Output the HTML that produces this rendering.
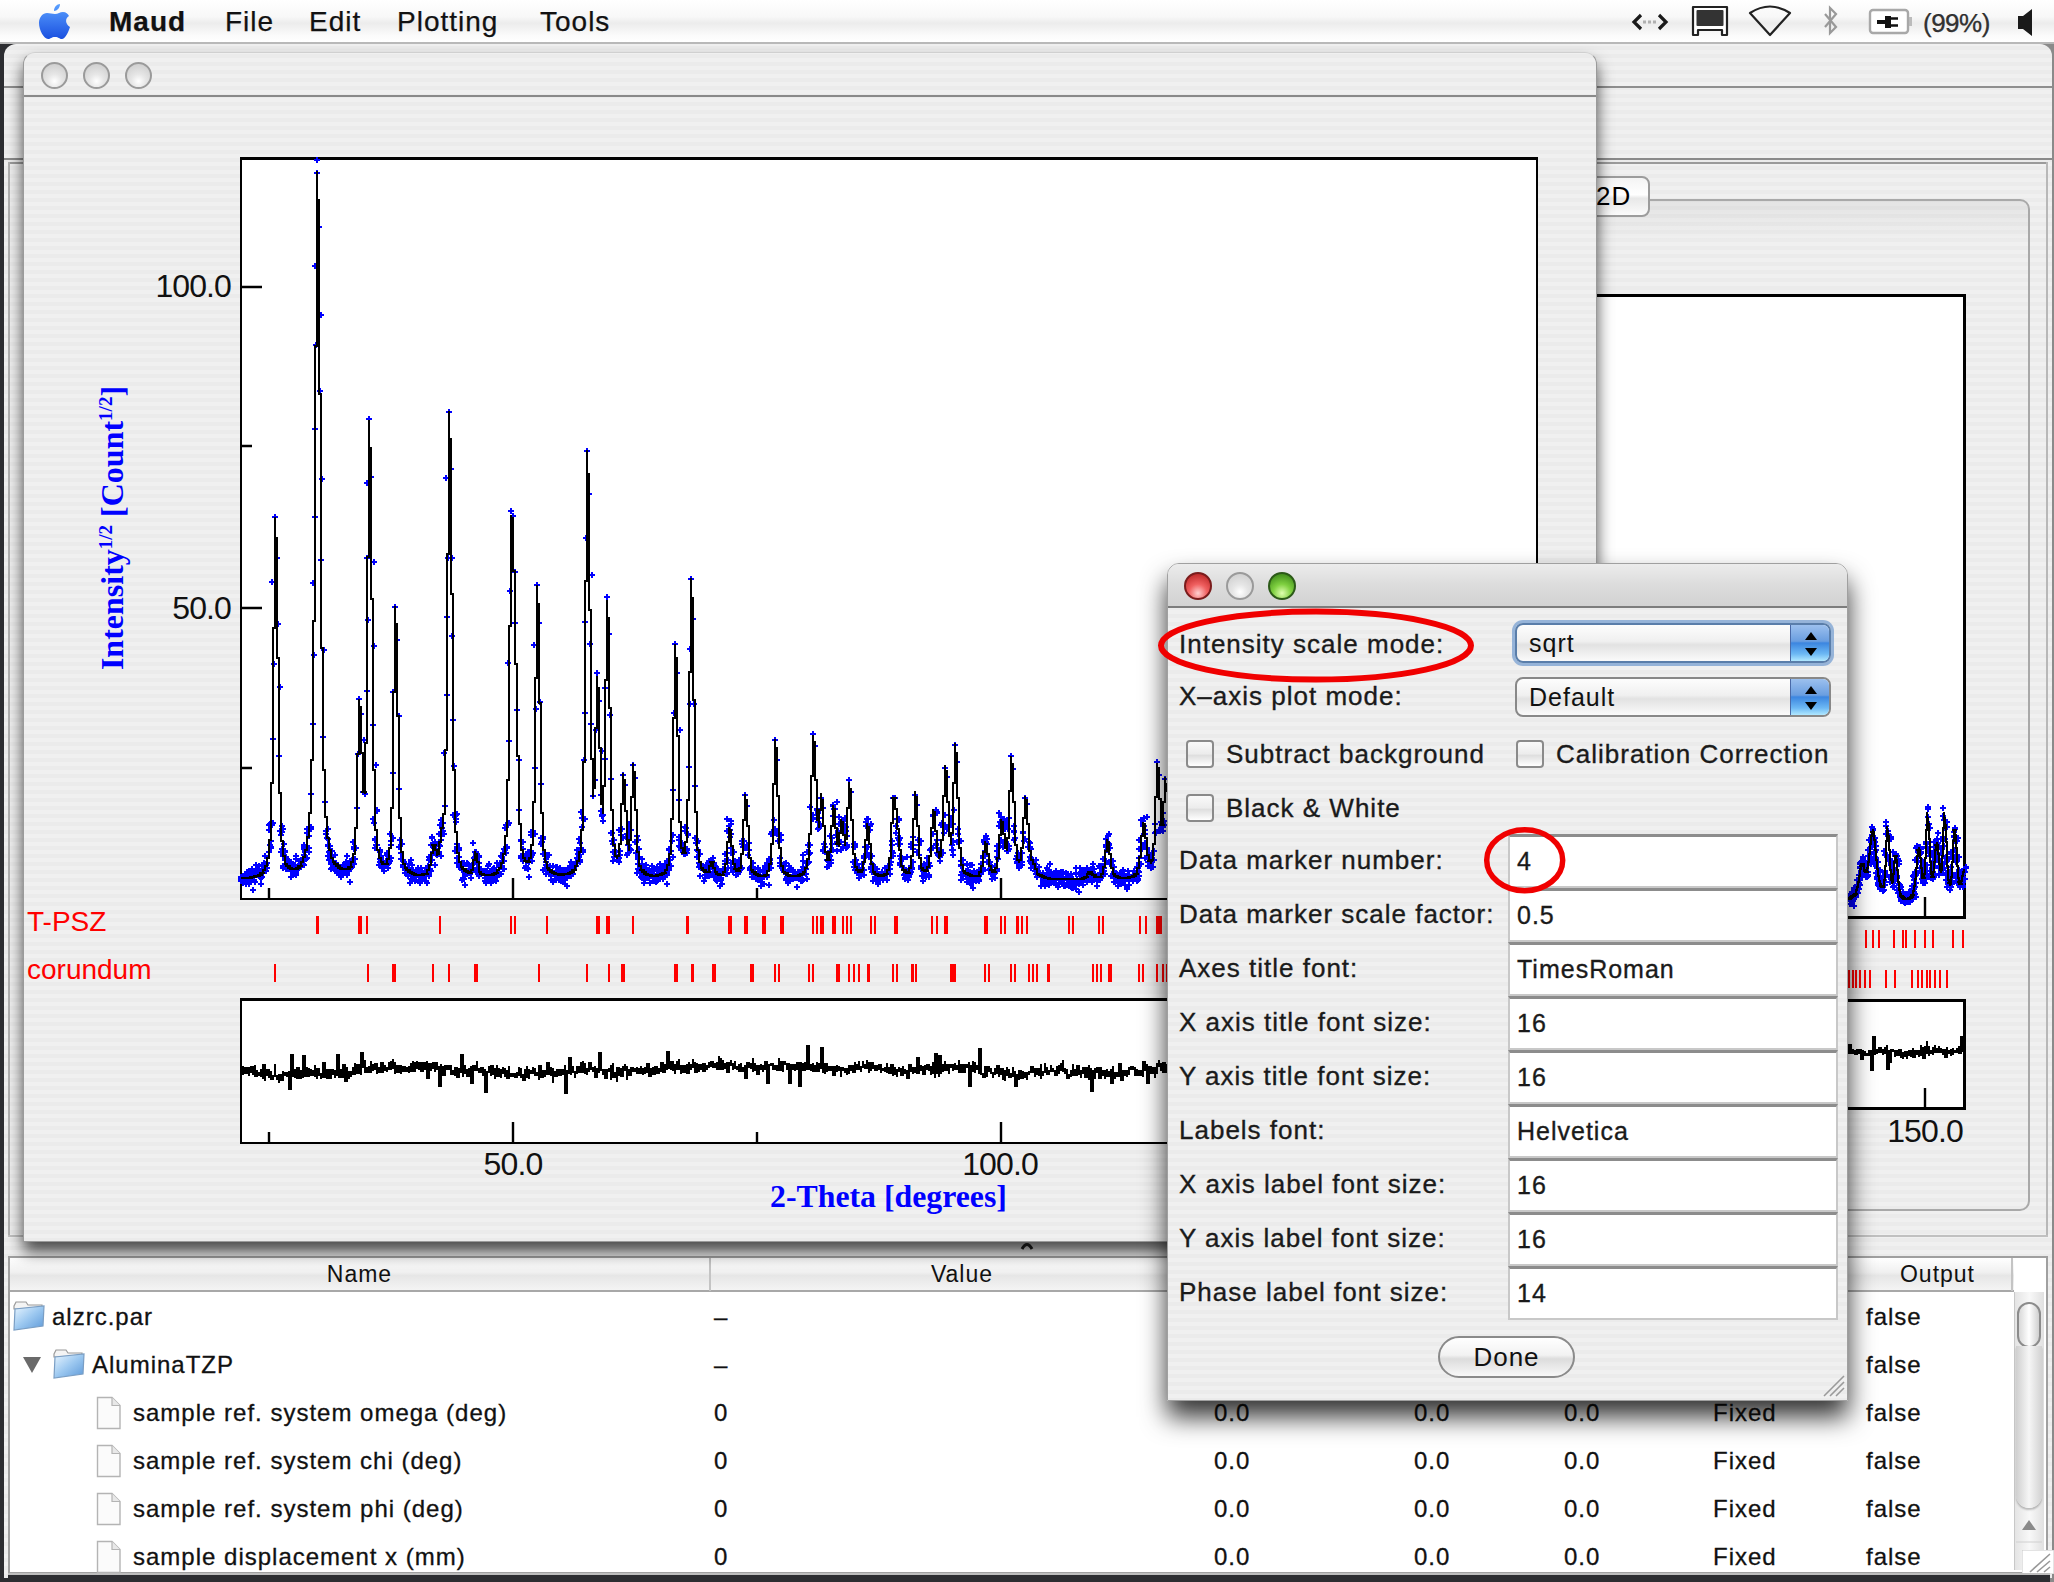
<!DOCTYPE html><html><head><meta charset="utf-8"><style>*{margin:0;padding:0;box-sizing:border-box}
html,body{width:2054px;height:1582px;overflow:hidden;background:#2c2d31;font-family:"Liberation Sans",sans-serif;color:#000}
.abs{position:absolute}
.pin{background:repeating-linear-gradient(to bottom,#ebebeb 0px,#ebebeb 2px,#f0f0f0 2px,#f0f0f0 6px,#ebebeb 6px,#ebebeb 8px);background-attachment:fixed}
#menubar{position:absolute;left:0;top:0;width:2054px;height:44px;background:linear-gradient(to bottom,#ffffff 0%,#f8f8f8 40%,#ececec 55%,#fbfbfb 85%,#ffffff 100%);border-bottom:2px solid #b8b8b8;z-index:50}
.menu{position:absolute;top:4px;font-size:28px;letter-spacing:1px;line-height:36px;color:#111;-webkit-text-stroke:0.25px #111}
</style></head><body><div class="abs" style="left:2040px;top:44px;width:14px;height:1538px;background:#8a8a8a"></div>
<div class="abs pin" style="left:4px;top:44px;width:2048px;height:1534px;border-radius:12px 12px 0 0"></div>
<div class="abs" style="left:4px;top:86px;width:2048px;height:2px;background:#8e8e8e"></div>
<div class="abs" style="left:4px;top:158px;width:2048px;height:2px;background:#8a8a8a"></div>
<div class="abs" style="left:8px;top:162px;width:2040px;height:2px;background:#9a9a9a"></div>
<div class="abs" style="left:8px;top:162px;width:2px;height:1075px;background:#b0b0b0"></div>
<div class="abs" style="left:2046px;top:162px;width:2px;height:1075px;background:#b8b8b8"></div>
<div class="abs" style="left:8px;top:1235px;width:2040px;height:2px;background:#c0c0c0"></div>
<div class="abs" style="left:1540px;top:199px;width:490px;height:1012px;border:2px solid #a9a9a9;border-radius:10px;background:linear-gradient(to bottom,rgba(0,0,0,0.05),rgba(0,0,0,0) 40px)"></div>
<div class="abs" style="left:1540px;top:176px;width:110px;height:41px;border:2px solid #9c9c9c;border-radius:8px;background:linear-gradient(to bottom,#f4f4f4,#ffffff 45%,#e8e8e8 55%,#fbfbfb);font-size:26px;letter-spacing:1px;line-height:37px;padding-left:54px">2D</div>
<div class="abs" style="left:1400px;top:294px;width:566px;height:625px;background:#fff;border:3px solid #000"></div>
<div class="abs" style="left:1400px;top:999px;width:566px;height:111px;background:#fff;border:3px solid #000"></div>
<div class="abs" style="left:1865px;top:1114px;width:120px;text-align:center;font-size:32px;letter-spacing:-0.9px;line-height:34px;color:#111">150.0</div>
<svg class="abs" style="left:0;top:0" width="2054" height="1582"><path d="M1847 904h6M1850 901v6M1847 895h6M1850 892v6M1847 895h6M1850 892v6M1845 899h6M1848 896v6M1848 895h6M1851 892v6M1846 899h6M1849 896v6M1845 897h6M1848 894v6M1849 899h6M1852 896v6M1845 896h6M1848 893v6M1848 896h6M1851 893v6M1850 894h6M1853 891v6M1850 893h6M1853 890v6M1846 899h6M1849 896v6M1847 898h6M1850 895v6M1850 901h6M1853 898v6M1850 897h6M1853 894v6M1851 898h6M1854 895v6M1849 893h6M1852 890v6M1850 898h6M1853 895v6M1849 896h6M1852 893v6M1851 906h6M1854 903v6M1848 895h6M1851 892v6M1850 895h6M1853 892v6M1850 898h6M1853 895v6M1848 900h6M1851 897v6M1852 897h6M1855 894v6M1849 897h6M1852 894v6M1849 892h6M1852 889v6M1849 897h6M1852 894v6M1849 902h6M1852 899v6M1853 890h6M1856 887v6M1853 897h6M1856 894v6M1850 892h6M1853 889v6M1852 893h6M1855 890v6M1852 896h6M1855 893v6M1854 893h6M1857 890v6M1851 895h6M1854 892v6M1851 896h6M1854 893v6M1851 888h6M1854 885v6M1855 893h6M1858 890v6M1853 887h6M1856 884v6M1853 890h6M1856 887v6M1855 888h6M1858 885v6M1855 888h6M1858 885v6M1853 895h6M1856 892v6M1857 885h6M1860 882v6M1855 885h6M1858 882v6M1854 885h6M1857 882v6M1856 889h6M1859 886v6M1857 885h6M1860 882v6M1854 880h6M1857 877v6M1857 879h6M1860 876v6M1856 883h6M1859 880v6M1856 879h6M1859 876v6M1857 880h6M1860 877v6M1859 872h6M1862 869v6M1856 875h6M1859 872v6M1859 872h6M1862 869v6M1858 875h6M1861 872v6M1859 875h6M1862 872v6M1857 867h6M1860 864v6M1857 864h6M1860 861v6M1858 871h6M1861 868v6M1857 863h6M1860 860v6M1857 868h6M1860 865v6M1861 867h6M1864 864v6M1858 862h6M1861 859v6M1860 861h6M1863 858v6M1861 865h6M1864 862v6M1857 864h6M1860 861v6M1858 862h6M1861 859v6M1861 864h6M1864 861v6M1860 859h6M1863 856v6M1861 868h6M1864 865v6M1860 857h6M1863 854v6M1859 867h6M1862 864v6M1860 868h6M1863 865v6M1863 872h6M1866 869v6M1863 870h6M1866 867v6M1860 869h6M1863 866v6M1860 874h6M1863 871v6M1861 872h6M1864 869v6M1860 873h6M1863 870v6M1864 872h6M1867 869v6M1864 872h6M1867 869v6M1862 872h6M1865 869v6M1864 877h6M1867 874v6M1865 872h6M1868 869v6M1865 876h6M1868 873v6M1861 871h6M1864 868v6M1865 875h6M1868 872v6M1862 868h6M1865 865v6M1862 870h6M1865 867v6M1862 870h6M1865 867v6M1864 865h6M1867 862v6M1863 877h6M1866 874v6M1866 861h6M1869 858v6M1864 865h6M1867 862v6M1865 863h6M1868 860v6M1863 870h6M1866 867v6M1867 860h6M1870 857v6M1867 859h6M1870 856v6M1868 864h6M1871 861v6M1867 859h6M1870 856v6M1868 860h6M1871 857v6M1865 850h6M1868 847v6M1865 856h6M1868 853v6M1867 849h6M1870 846v6M1868 854h6M1871 851v6M1868 847h6M1871 844v6M1869 835h6M1872 832v6M1870 840h6M1873 837v6M1870 844h6M1873 841v6M1869 840h6M1872 837v6M1866 840h6M1869 837v6M1869 837h6M1872 834v6M1870 830h6M1873 827v6M1869 827h6M1872 824v6M1870 829h6M1873 826v6M1870 839h6M1873 836v6M1872 838h6M1875 835v6M1873 850h6M1876 847v6M1873 846h6M1876 843v6M1872 842h6M1875 839v6M1871 840h6M1874 837v6M1871 840h6M1874 837v6M1872 852h6M1875 849v6M1873 858h6M1876 855v6M1872 857h6M1875 854v6M1871 858h6M1874 855v6M1871 857h6M1874 854v6M1873 864h6M1876 861v6M1872 862h6M1875 859v6M1873 866h6M1876 863v6M1875 862h6M1878 859v6M1874 868h6M1877 865v6M1877 872h6M1880 869v6M1873 873h6M1876 870v6M1875 874h6M1878 871v6M1875 872h6M1878 869v6M1877 870h6M1880 867v6M1878 883h6M1881 880v6M1874 877h6M1877 874v6M1875 876h6M1878 873v6M1874 879h6M1877 876v6M1875 876h6M1878 873v6M1875 885h6M1878 882v6M1875 883h6M1878 880v6M1879 880h6M1882 877v6M1875 878h6M1878 875v6M1876 884h6M1879 881v6M1877 889h6M1880 886v6M1876 886h6M1879 883v6M1876 882h6M1879 879v6M1877 887h6M1880 884v6M1880 891h6M1883 888v6M1881 876h6M1884 873v6M1878 887h6M1881 884v6M1880 890h6M1883 887v6M1878 883h6M1881 880v6M1877 881h6M1880 878v6M1881 890h6M1884 887v6M1879 885h6M1882 882v6M1878 887h6M1881 884v6M1881 882h6M1884 879v6M1882 885h6M1885 882v6M1881 880h6M1884 877v6M1880 885h6M1883 882v6M1879 883h6M1882 880v6M1879 878h6M1882 875v6M1880 884h6M1883 881v6M1880 879h6M1883 876v6M1882 871h6M1885 868v6M1882 875h6M1885 872v6M1882 882h6M1885 879v6M1882 873h6M1885 870v6M1885 858h6M1888 855v6M1885 857h6M1888 854v6M1884 855h6M1887 852v6M1881 851h6M1884 848v6M1882 855h6M1885 852v6M1883 826h6M1886 823v6M1883 822h6M1886 819v6M1884 834h6M1887 831v6M1886 837h6M1889 834v6M1887 838h6M1890 835v6M1886 839h6M1889 836v6M1883 834h6M1886 831v6M1885 834h6M1888 831v6M1888 839h6M1891 836v6M1885 831h6M1888 828v6M1888 837h6M1891 834v6M1886 836h6M1889 833v6M1889 864h6M1892 861v6M1886 861h6M1889 858v6M1889 863h6M1892 860v6M1889 861h6M1892 858v6M1888 865h6M1891 862v6M1890 878h6M1893 875v6M1889 878h6M1892 875v6M1886 877h6M1889 874v6M1889 878h6M1892 875v6M1890 879h6M1893 876v6M1890 879h6M1893 876v6M1887 882h6M1890 879v6M1891 881h6M1894 878v6M1890 876h6M1893 873v6M1890 887h6M1893 884v6M1890 880h6M1893 877v6M1890 883h6M1893 880v6M1891 886h6M1894 883v6M1891 875h6M1894 872v6M1892 879h6M1895 876v6M1893 870h6M1896 867v6M1889 870h6M1892 867v6M1889 868h6M1892 865v6M1889 869h6M1892 866v6M1891 871h6M1894 868v6M1892 856h6M1895 853v6M1893 854h6M1896 851v6M1890 852h6M1893 849v6M1894 856h6M1897 853v6M1894 856h6M1897 853v6M1895 860h6M1898 857v6M1894 863h6M1897 860v6M1895 859h6M1898 856v6M1895 859h6M1898 856v6M1895 860h6M1898 857v6M1893 856h6M1896 853v6M1896 861h6M1899 858v6M1896 864h6M1899 861v6M1894 861h6M1897 858v6M1893 861h6M1896 858v6M1894 878h6M1897 875v6M1894 876h6M1897 873v6M1893 874h6M1896 871v6M1894 877h6M1897 874v6M1893 875h6M1896 872v6M1896 884h6M1899 881v6M1897 889h6M1900 886v6M1898 887h6M1901 884v6M1897 885h6M1900 882v6M1894 890h6M1897 887v6M1897 895h6M1900 892v6M1897 896h6M1900 893v6M1897 895h6M1900 892v6M1899 899h6M1902 896v6M1895 893h6M1898 890v6M1899 896h6M1902 893v6M1900 896h6M1903 893v6M1900 892h6M1903 889v6M1897 895h6M1900 892v6M1897 897h6M1900 894v6M1898 899h6M1901 896v6M1899 899h6M1902 896v6M1897 897h6M1900 894v6M1898 901h6M1901 898v6M1897 896h6M1900 893v6M1900 896h6M1903 893v6M1900 900h6M1903 897v6M1901 899h6M1904 896v6M1898 901h6M1901 898v6M1899 900h6M1902 897v6M1901 902h6M1904 899v6M1902 903h6M1905 900v6M1899 897h6M1902 894v6M1903 900h6M1906 897v6M1899 896h6M1902 893v6M1903 897h6M1906 894v6M1904 898h6M1907 895v6M1902 900h6M1905 897v6M1900 897h6M1903 894v6M1901 900h6M1904 897v6M1903 896h6M1906 893v6M1905 897h6M1908 894v6M1902 894h6M1905 891v6M1904 900h6M1907 897v6M1903 901h6M1906 898v6M1904 899h6M1907 896v6M1904 899h6M1907 896v6M1906 902h6M1909 899v6M1904 900h6M1907 897v6M1904 900h6M1907 897v6M1904 902h6M1907 899v6M1907 902h6M1910 899v6M1906 901h6M1909 898v6M1904 897h6M1907 894v6M1907 894h6M1910 891v6M1904 900h6M1907 897v6M1905 899h6M1908 896v6M1906 895h6M1909 892v6M1905 900h6M1908 897v6M1907 901h6M1910 898v6M1907 898h6M1910 895v6M1907 894h6M1910 891v6M1909 897h6M1912 894v6M1909 899h6M1912 896v6M1908 897h6M1911 894v6M1906 892h6M1909 889v6M1906 895h6M1909 892v6M1909 898h6M1912 895v6M1909 896h6M1912 893v6M1907 899h6M1910 896v6M1911 892h6M1914 889v6M1907 892h6M1910 889v6M1909 897h6M1912 894v6M1911 893h6M1914 890v6M1911 897h6M1914 894v6M1910 891h6M1913 888v6M1910 893h6M1913 890v6M1910 899h6M1913 896v6M1912 894h6M1915 891v6M1908 891h6M1911 888v6M1912 887h6M1915 884v6M1909 894h6M1912 891v6M1909 886h6M1912 883v6M1913 897h6M1916 894v6M1909 889h6M1912 886v6M1911 880h6M1914 877v6M1911 885h6M1914 882v6M1910 876h6M1913 873v6M1913 883h6M1916 880v6M1911 889h6M1914 886v6M1915 873h6M1918 870v6M1911 877h6M1914 874v6M1911 875h6M1914 872v6M1912 876h6M1915 873v6M1912 872h6M1915 869v6M1912 860h6M1915 857v6M1915 862h6M1918 859v6M1915 857h6M1918 854v6M1915 858h6M1918 855v6M1914 862h6M1917 859v6M1914 846h6M1917 843v6M1915 850h6M1918 847v6M1913 848h6M1916 845v6M1917 854h6M1920 851v6M1917 847h6M1920 844v6M1916 847h6M1919 844v6M1918 852h6M1921 849v6M1918 849h6M1921 846v6M1915 850h6M1918 847v6M1915 851h6M1918 848v6M1916 851h6M1919 848v6M1915 852h6M1918 849v6M1917 852h6M1920 849v6M1918 853h6M1921 850v6M1916 853h6M1919 850v6M1920 862h6M1923 859v6M1917 868h6M1920 865v6M1920 863h6M1923 860v6M1919 872h6M1922 869v6M1919 861h6M1922 858v6M1920 875h6M1923 872v6M1918 873h6M1921 870v6M1917 871h6M1920 868v6M1920 874h6M1923 871v6M1918 868h6M1921 865v6M1921 876h6M1924 873v6M1919 879h6M1922 876v6M1920 881h6M1923 878v6M1922 883h6M1925 880v6M1920 877h6M1923 874v6M1920 883h6M1923 880v6M1922 876h6M1925 873v6M1922 874h6M1925 871v6M1921 879h6M1924 876v6M1923 879h6M1926 876v6M1924 865h6M1927 862v6M1922 870h6M1925 867v6M1920 872h6M1923 869v6M1924 871h6M1927 868v6M1920 869h6M1923 866v6M1923 842h6M1926 839v6M1923 847h6M1926 844v6M1923 844h6M1926 841v6M1923 848h6M1926 845v6M1924 844h6M1927 841v6M1925 807h6M1928 804v6M1925 809h6M1928 806v6M1925 817h6M1928 814v6M1925 825h6M1928 822v6M1926 824h6M1929 821v6M1927 828h6M1930 825v6M1929 853h6M1932 850v6M1927 856h6M1930 853v6M1925 851h6M1928 848v6M1928 855h6M1931 852v6M1926 853h6M1929 850v6M1929 869h6M1932 866v6M1930 874h6M1933 871v6M1927 875h6M1930 872v6M1927 875h6M1930 872v6M1928 874h6M1931 871v6M1927 877h6M1930 874v6M1928 878h6M1931 875v6M1931 877h6M1934 874v6M1930 878h6M1933 875v6M1927 875h6M1930 872v6M1932 874h6M1935 871v6M1928 874h6M1931 871v6M1928 878h6M1931 875v6M1930 879h6M1933 876v6M1929 878h6M1932 875v6M1929 868h6M1932 865v6M1930 863h6M1933 860v6M1930 861h6M1933 858v6M1931 868h6M1934 865v6M1932 866h6M1935 863v6M1932 857h6M1935 854v6M1931 852h6M1934 849v6M1930 856h6M1933 853v6M1934 859h6M1937 856v6M1932 854h6M1935 851v6M1931 847h6M1934 844v6M1934 839h6M1937 836v6M1935 843h6M1938 840v6M1931 842h6M1934 839v6M1931 842h6M1934 839v6M1933 845h6M1936 842v6M1933 843h6M1936 840v6M1935 833h6M1938 830v6M1933 842h6M1936 839v6M1936 846h6M1939 843v6M1935 847h6M1938 844v6M1936 855h6M1939 852v6M1935 848h6M1938 845v6M1934 846h6M1937 843v6M1934 853h6M1937 850v6M1934 856h6M1937 853v6M1938 853h6M1941 850v6M1936 859h6M1939 856v6M1934 860h6M1937 857v6M1938 862h6M1941 859v6M1936 866h6M1939 863v6M1939 866h6M1942 863v6M1936 862h6M1939 859v6M1938 871h6M1941 868v6M1936 875h6M1939 872v6M1940 868h6M1943 865v6M1940 870h6M1943 867v6M1939 873h6M1942 870v6M1938 869h6M1941 866v6M1936 868h6M1939 865v6M1940 869h6M1943 866v6M1938 864h6M1941 861v6M1938 868h6M1941 865v6M1941 864h6M1944 861v6M1941 868h6M1944 865v6M1938 839h6M1941 836v6M1939 849h6M1942 846v6M1940 840h6M1943 837v6M1941 846h6M1944 843v6M1942 839h6M1945 836v6M1940 808h6M1943 805v6M1940 816h6M1943 813v6M1942 828h6M1945 825v6M1941 820h6M1944 817v6M1944 827h6M1947 824v6M1944 822h6M1947 819v6M1946 859h6M1949 856v6M1943 857h6M1946 854v6M1942 858h6M1945 855v6M1943 862h6M1946 859v6M1943 858h6M1946 855v6M1947 877h6M1950 874v6M1943 880h6M1946 877v6M1943 873h6M1946 870v6M1947 872h6M1950 869v6M1943 875h6M1946 872v6M1945 877h6M1948 874v6M1944 887h6M1947 884v6M1947 884h6M1950 881v6M1948 887h6M1951 884v6M1947 887h6M1950 884v6M1947 890h6M1950 887v6M1947 884h6M1950 881v6M1947 886h6M1950 883v6M1948 884h6M1951 881v6M1945 884h6M1948 881v6M1947 884h6M1950 881v6M1949 884h6M1952 881v6M1946 881h6M1949 878v6M1949 881h6M1952 878v6M1949 882h6M1952 879v6M1950 876h6M1953 873v6M1947 876h6M1950 873v6M1948 867h6M1951 864v6M1951 875h6M1954 872v6M1951 876h6M1954 873v6M1950 857h6M1953 854v6M1952 850h6M1955 847v6M1948 852h6M1951 849v6M1948 854h6M1951 851v6M1950 851h6M1953 848v6M1951 832h6M1954 829v6M1952 828h6M1955 825v6M1952 829h6M1955 826v6M1951 836h6M1954 833v6M1952 841h6M1955 838v6M1952 840h6M1955 837v6M1954 841h6M1957 838v6M1955 838h6M1958 835v6M1951 837h6M1954 834v6M1953 862h6M1956 859v6M1952 858h6M1955 855v6M1954 861h6M1957 858v6M1956 857h6M1959 854v6M1953 855h6M1956 852v6M1956 870h6M1959 867v6M1956 873h6M1959 870v6M1953 878h6M1956 875v6M1956 873h6M1959 870v6M1954 873h6M1957 870v6M1958 880h6M1961 877v6M1955 882h6M1958 879v6M1956 881h6M1959 878v6M1958 885h6M1961 882v6M1957 883h6M1960 880v6M1957 887h6M1960 884v6M1955 883h6M1958 880v6M1959 883h6M1962 880v6M1957 881h6M1960 878v6M1959 883h6M1962 880v6M1960 886h6M1963 883v6M1960 887h6M1963 884v6M1957 882h6M1960 879v6M1957 882h6M1960 879v6M1956 885h6M1959 882v6M1960 882h6M1963 879v6M1959 876h6M1962 873v6M1959 885h6M1962 882v6M1959 877h6M1962 874v6M1958 879h6M1961 876v6M1959 877h6M1962 874v6M1962 872h6M1965 869v6M1958 872h6M1961 869v6M1960 873h6M1963 870v6M1962 879h6M1965 876v6M1959 876h6M1962 873v6M1961 869h6M1964 866v6M1963 867h6M1966 864v6M1961 871h6M1964 868v6M1963 868h6M1966 865v6" stroke="#0000ff" stroke-width="2" fill="none" shape-rendering="crispEdges"/><path d="M1848 899H1851M1849 898H1852M1850 897H1853M1851 896H1854M1852 896H1855M1853 895H1856M1854 894H1857M1856 892V890M1857 890V889M1857 889V887M1858 887V885M1858 885V882M1859 882V879M1859 879V876M1860 876V872M1860 872V869M1861 869V866M1860 866H1863M1861 864H1864M1863 865V866M1864 866V868M1864 868V870M1865 870V871M1864 871H1867M1865 872H1868M1867 871V868M1868 868V866M1868 866V862M1869 862V859M1869 859V854M1870 854V849M1870 849V844M1871 844V839M1871 839V836M1872 836V832M1871 832H1874M1873 830V832M1874 832V835M1874 835V840M1875 840V844M1875 844V850M1876 850V855M1876 855V860M1877 860V865M1877 865V869M1878 869V873M1878 873V876M1879 876V879M1879 879V881M1880 881V883M1880 883V884M1881 884V886M1880 886H1883M1881 887H1884M1883 887V886M1884 886V884M1884 884V880M1885 880V876M1885 876V866M1886 866V855M1886 855V841M1887 841V827M1887 827V831M1888 831V835M1888 835V836M1889 836V838M1889 838V850M1890 850V862M1890 862V870M1891 870V878M1891 878V880M1892 880V883M1892 883V882M1893 882V880M1893 880V874M1894 874V869M1894 869V862M1895 862V856M1894 856H1897M1896 858V860M1897 860V863M1897 863V870M1898 870V876M1898 876V882M1899 882V887M1899 887V890M1900 890V893M1900 893V894M1901 894V896M1900 896H1903M1901 897H1904M1902 898H1905M1903 899H1906M1904 899H1907M1905 899H1908M1906 899H1909M1907 899H1910M1908 898H1911M1909 898H1912M1910 897H1913M1911 895H1914M1913 893V891M1914 891V889M1914 889V886M1915 886V884M1915 884V879M1916 879V874M1916 874V868M1917 868V861M1917 861V856M1918 856V850M1917 850H1920M1919 848V850M1920 850V852M1920 852V858M1921 858V863M1921 863V868M1922 868V873M1922 873V876M1923 876V878M1922 878H1925M1924 878V874M1925 874V870M1925 870V858M1926 858V846M1926 846V830M1927 830V813M1927 813V818M1928 818V822M1928 822V824M1929 824V825M1929 825V839M1930 839V853M1930 853V862M1931 862V872M1931 872V874M1932 874V877M1931 877H1934M1933 875V872M1934 872V868M1934 868V862M1935 862V856M1935 856V850M1936 850V845M1935 845H1938M1937 843V846M1938 846V848M1938 848V854M1939 854V859M1939 859V864M1940 864V868M1940 868V870M1941 870V872M1941 872V870M1942 870V867M1942 867V856M1943 856V844M1943 844V828M1944 828V813M1944 813V818M1945 818V823M1945 823V825M1946 825V827M1946 827V842M1947 842V856M1947 856V866M1948 866V876M1948 876V880M1949 880V883M1948 883H1951M1950 885V884M1951 884V882M1951 882V877M1952 877V872M1952 872V862M1953 862V852M1953 852V841M1954 841V830M1953 830H1956M1955 832V835M1956 835V838M1956 838V848M1957 848V858M1957 858V866M1958 866V875M1958 875V878M1959 878V882M1958 882H1961M1959 884H1962M1961 883V881M1962 881V879M1962 879V876M1963 876V874M1963 874V872M1964 872V870" stroke="#000" stroke-width="2" fill="none" stroke-linecap="square" shape-rendering="crispEdges"/><path d="M1849 1045V1053M1851 1045V1053M1853 1050V1053M1855 1051V1054M1857 1050V1054M1859 1050V1053M1861 1050V1059M1863 1051V1059M1865 1052V1055M1867 1054V1055M1869 1051V1055M1871 1051V1070M1873 1037V1070M1875 1037V1054M1877 1050V1053M1879 1048V1052M1881 1048V1052M1883 1050V1054M1885 1048V1053M1887 1046V1069M1889 1051V1069M1891 1050V1062M1893 1050V1051M1895 1051V1056M1897 1051V1055M1899 1050V1055M1901 1050V1057M1903 1053V1058M1905 1052V1056M1907 1052V1058M1909 1051V1055M1911 1051V1056M1913 1049V1057M1915 1051V1057M1917 1051V1054M1919 1051V1056M1921 1046V1055M1923 1048V1058M1925 1047V1058M1927 1042V1053M1929 1047V1055M1931 1051V1053M1933 1048V1054M1935 1046V1052M1937 1049V1052M1939 1047V1052M1941 1049V1052M1943 1050V1054M1945 1050V1057M1947 1048V1057M1949 1051V1053M1951 1050V1055M1953 1049V1054M1955 1051V1052M1957 1049V1052M1959 1047V1053M1961 1037V1053M1963 1037V1051" stroke="#000" stroke-width="2" fill="none" stroke-linecap="square" shape-rendering="crispEdges"/><path d="M1866.0 930v18M1873.0 930v18M1879.0 930v18M1894.0 930v18M1903.0 930v18M1906.0 930v18M1915.0 930v18M1925.0 930v18M1933.0 930v18M1953.0 930v18M1963.0 930v18M1849.0 970v18M1853.0 970v18M1856.0 970v18M1860.0 970v18M1865.0 970v18M1870.0 970v18M1886.0 970v18M1895.0 970v18M1912.0 970v18M1918.0 970v18M1922.0 970v18M1927.0 970v18M1930.0 970v18M1935.0 970v18M1940.0 970v18M1947.0 970v18" stroke="#ff0000" stroke-width="2" fill="none" shape-rendering="crispEdges"/><path d="M1925 917v-20M1925 1108v-20" stroke="#000" stroke-width="2.4"/></svg>
<div class="abs" style="left:8px;top:1256px;width:2040px;height:318px;background:#fff;border:2px solid #a0a0a0"></div>
<div class="abs" style="left:10px;top:1258px;width:2004px;height:34px;background:linear-gradient(to bottom,#ffffff,#f0f0f0 45%,#e6e6e6 55%,#f4f4f4);border-bottom:2px solid #a8a8a8"></div>
<div class="abs" style="left:10px;top:1258px;width:701px;height:33px;border-right:2px solid #c4c4c4;text-align:center;font-size:23px;letter-spacing:1px;line-height:32px;color:#111">Name</div>
<div class="abs" style="left:711px;top:1258px;width:504px;height:33px;border-right:2px solid #c4c4c4;text-align:center;font-size:23px;letter-spacing:1px;line-height:32px;color:#111">Value</div>
<div class="abs" style="left:1864px;top:1258px;width:149px;height:33px;border-right:2px solid #c4c4c4;text-align:center;font-size:23px;letter-spacing:1px;line-height:32px;color:#111">Output</div>
<svg class="abs" style="left:12px;top:1300px" width="34" height="32"><defs><linearGradient id="fg0" x1="0" y1="0" x2="1" y2="1"><stop offset="0" stop-color="#eaf6ff"/><stop offset="0.5" stop-color="#9cc8f0"/><stop offset="1" stop-color="#5c98d8"/></linearGradient></defs><path d="M2 6L4 2H14L16 5H30V9H2Z" fill="#f4f4f4" stroke="#9a9a9a" stroke-width="1.2"/><path d="M2 30L3 9L32 6L31 26Z" fill="url(#fg0)" stroke="#7a9ec4" stroke-width="1.2"/></svg>
<div class="abs" style="left:52px;top:1302px;font-size:24px;letter-spacing:1px;line-height:30px;color:#111;-webkit-text-stroke:0.3px #111">alzrc.par</div>
<div class="abs" style="left:714px;top:1302px;font-size:24px;letter-spacing:1px;line-height:30px;color:#111;-webkit-text-stroke:0.3px #111">&#8211;</div>
<div class="abs" style="left:1214px;top:1302px;font-size:24px;letter-spacing:1px;line-height:30px;color:#111;-webkit-text-stroke:0.3px #111">0.0</div>
<div class="abs" style="left:1414px;top:1302px;font-size:24px;letter-spacing:1px;line-height:30px;color:#111;-webkit-text-stroke:0.3px #111">0.0</div>
<div class="abs" style="left:1564px;top:1302px;font-size:24px;letter-spacing:1px;line-height:30px;color:#111;-webkit-text-stroke:0.3px #111">0.0</div>
<div class="abs" style="left:1713px;top:1302px;font-size:24px;letter-spacing:1px;line-height:30px;color:#111;-webkit-text-stroke:0.3px #111">Fixed</div>
<div class="abs" style="left:1866px;top:1302px;font-size:24px;letter-spacing:1px;line-height:30px;color:#111;-webkit-text-stroke:0.3px #111">false</div>
<svg class="abs" style="left:52px;top:1348px" width="34" height="32"><defs><linearGradient id="fg1" x1="0" y1="0" x2="1" y2="1"><stop offset="0" stop-color="#eaf6ff"/><stop offset="0.5" stop-color="#9cc8f0"/><stop offset="1" stop-color="#5c98d8"/></linearGradient></defs><path d="M2 6L4 2H14L16 5H30V9H2Z" fill="#f4f4f4" stroke="#9a9a9a" stroke-width="1.2"/><path d="M2 30L3 9L32 6L31 26Z" fill="url(#fg1)" stroke="#7a9ec4" stroke-width="1.2"/></svg>
<svg class="abs" style="left:22px;top:1355px" width="20" height="20"><path d="M1 2H19L10 18Z" fill="#6a6a6a"/></svg>
<div class="abs" style="left:92px;top:1350px;font-size:24px;letter-spacing:1px;line-height:30px;color:#111;-webkit-text-stroke:0.3px #111">AluminaTZP</div>
<div class="abs" style="left:714px;top:1350px;font-size:24px;letter-spacing:1px;line-height:30px;color:#111;-webkit-text-stroke:0.3px #111">&#8211;</div>
<div class="abs" style="left:1214px;top:1350px;font-size:24px;letter-spacing:1px;line-height:30px;color:#111;-webkit-text-stroke:0.3px #111">0.0</div>
<div class="abs" style="left:1414px;top:1350px;font-size:24px;letter-spacing:1px;line-height:30px;color:#111;-webkit-text-stroke:0.3px #111">0.0</div>
<div class="abs" style="left:1564px;top:1350px;font-size:24px;letter-spacing:1px;line-height:30px;color:#111;-webkit-text-stroke:0.3px #111">0.0</div>
<div class="abs" style="left:1713px;top:1350px;font-size:24px;letter-spacing:1px;line-height:30px;color:#111;-webkit-text-stroke:0.3px #111">Fixed</div>
<div class="abs" style="left:1866px;top:1350px;font-size:24px;letter-spacing:1px;line-height:30px;color:#111;-webkit-text-stroke:0.3px #111">false</div>
<svg class="abs" style="left:96px;top:1396px" width="26" height="34"><path d="M1.5 1.5H16L24 9.5V32.5H1.5Z" fill="#fbfbfb" stroke="#b4b4b4" stroke-width="1.4"/><path d="M16 1.5V9.5H24" fill="#e8e8e8" stroke="#b4b4b4" stroke-width="1.2"/></svg>
<div class="abs" style="left:133px;top:1398px;font-size:24px;letter-spacing:1px;line-height:30px;color:#111;-webkit-text-stroke:0.3px #111">sample ref. system omega (deg)</div>
<div class="abs" style="left:714px;top:1398px;font-size:24px;letter-spacing:1px;line-height:30px;color:#111;-webkit-text-stroke:0.3px #111">0</div>
<div class="abs" style="left:1214px;top:1398px;font-size:24px;letter-spacing:1px;line-height:30px;color:#111;-webkit-text-stroke:0.3px #111">0.0</div>
<div class="abs" style="left:1414px;top:1398px;font-size:24px;letter-spacing:1px;line-height:30px;color:#111;-webkit-text-stroke:0.3px #111">0.0</div>
<div class="abs" style="left:1564px;top:1398px;font-size:24px;letter-spacing:1px;line-height:30px;color:#111;-webkit-text-stroke:0.3px #111">0.0</div>
<div class="abs" style="left:1713px;top:1398px;font-size:24px;letter-spacing:1px;line-height:30px;color:#111;-webkit-text-stroke:0.3px #111">Fixed</div>
<div class="abs" style="left:1866px;top:1398px;font-size:24px;letter-spacing:1px;line-height:30px;color:#111;-webkit-text-stroke:0.3px #111">false</div>
<svg class="abs" style="left:96px;top:1444px" width="26" height="34"><path d="M1.5 1.5H16L24 9.5V32.5H1.5Z" fill="#fbfbfb" stroke="#b4b4b4" stroke-width="1.4"/><path d="M16 1.5V9.5H24" fill="#e8e8e8" stroke="#b4b4b4" stroke-width="1.2"/></svg>
<div class="abs" style="left:133px;top:1446px;font-size:24px;letter-spacing:1px;line-height:30px;color:#111;-webkit-text-stroke:0.3px #111">sample ref. system chi (deg)</div>
<div class="abs" style="left:714px;top:1446px;font-size:24px;letter-spacing:1px;line-height:30px;color:#111;-webkit-text-stroke:0.3px #111">0</div>
<div class="abs" style="left:1214px;top:1446px;font-size:24px;letter-spacing:1px;line-height:30px;color:#111;-webkit-text-stroke:0.3px #111">0.0</div>
<div class="abs" style="left:1414px;top:1446px;font-size:24px;letter-spacing:1px;line-height:30px;color:#111;-webkit-text-stroke:0.3px #111">0.0</div>
<div class="abs" style="left:1564px;top:1446px;font-size:24px;letter-spacing:1px;line-height:30px;color:#111;-webkit-text-stroke:0.3px #111">0.0</div>
<div class="abs" style="left:1713px;top:1446px;font-size:24px;letter-spacing:1px;line-height:30px;color:#111;-webkit-text-stroke:0.3px #111">Fixed</div>
<div class="abs" style="left:1866px;top:1446px;font-size:24px;letter-spacing:1px;line-height:30px;color:#111;-webkit-text-stroke:0.3px #111">false</div>
<svg class="abs" style="left:96px;top:1492px" width="26" height="34"><path d="M1.5 1.5H16L24 9.5V32.5H1.5Z" fill="#fbfbfb" stroke="#b4b4b4" stroke-width="1.4"/><path d="M16 1.5V9.5H24" fill="#e8e8e8" stroke="#b4b4b4" stroke-width="1.2"/></svg>
<div class="abs" style="left:133px;top:1494px;font-size:24px;letter-spacing:1px;line-height:30px;color:#111;-webkit-text-stroke:0.3px #111">sample ref. system phi (deg)</div>
<div class="abs" style="left:714px;top:1494px;font-size:24px;letter-spacing:1px;line-height:30px;color:#111;-webkit-text-stroke:0.3px #111">0</div>
<div class="abs" style="left:1214px;top:1494px;font-size:24px;letter-spacing:1px;line-height:30px;color:#111;-webkit-text-stroke:0.3px #111">0.0</div>
<div class="abs" style="left:1414px;top:1494px;font-size:24px;letter-spacing:1px;line-height:30px;color:#111;-webkit-text-stroke:0.3px #111">0.0</div>
<div class="abs" style="left:1564px;top:1494px;font-size:24px;letter-spacing:1px;line-height:30px;color:#111;-webkit-text-stroke:0.3px #111">0.0</div>
<div class="abs" style="left:1713px;top:1494px;font-size:24px;letter-spacing:1px;line-height:30px;color:#111;-webkit-text-stroke:0.3px #111">Fixed</div>
<div class="abs" style="left:1866px;top:1494px;font-size:24px;letter-spacing:1px;line-height:30px;color:#111;-webkit-text-stroke:0.3px #111">false</div>
<svg class="abs" style="left:96px;top:1540px" width="26" height="34"><path d="M1.5 1.5H16L24 9.5V32.5H1.5Z" fill="#fbfbfb" stroke="#b4b4b4" stroke-width="1.4"/><path d="M16 1.5V9.5H24" fill="#e8e8e8" stroke="#b4b4b4" stroke-width="1.2"/></svg>
<div class="abs" style="left:133px;top:1542px;font-size:24px;letter-spacing:1px;line-height:30px;color:#111;-webkit-text-stroke:0.3px #111">sample displacement x (mm)</div>
<div class="abs" style="left:714px;top:1542px;font-size:24px;letter-spacing:1px;line-height:30px;color:#111;-webkit-text-stroke:0.3px #111">0</div>
<div class="abs" style="left:1214px;top:1542px;font-size:24px;letter-spacing:1px;line-height:30px;color:#111;-webkit-text-stroke:0.3px #111">0.0</div>
<div class="abs" style="left:1414px;top:1542px;font-size:24px;letter-spacing:1px;line-height:30px;color:#111;-webkit-text-stroke:0.3px #111">0.0</div>
<div class="abs" style="left:1564px;top:1542px;font-size:24px;letter-spacing:1px;line-height:30px;color:#111;-webkit-text-stroke:0.3px #111">0.0</div>
<div class="abs" style="left:1713px;top:1542px;font-size:24px;letter-spacing:1px;line-height:30px;color:#111;-webkit-text-stroke:0.3px #111">Fixed</div>
<div class="abs" style="left:1866px;top:1542px;font-size:24px;letter-spacing:1px;line-height:30px;color:#111;-webkit-text-stroke:0.3px #111">false</div>
<div class="abs" style="left:2014px;top:1292px;width:30px;height:278px;background:linear-gradient(to right,#e4e4e4,#f8f8f8 50%,#e0e0e0);border-left:1px solid #c8c8c8"></div>
<div class="abs" style="left:2017px;top:1302px;width:24px;height:46px;border-radius:12px;border:2px solid #8c8c8c;background:linear-gradient(to right,#d8d8d8,#ffffff 50%,#d0d0d0)"></div>
<div class="abs" style="left:2016px;top:1346px;width:26px;height:162px;border-radius:0 0 13px 13px;background:linear-gradient(to right,#cfcfcf,#f6f6f6 50%,#d2d2d2);box-shadow:0 2px 2px rgba(0,0,0,0.25)"></div>
<svg class="abs" style="left:2014px;top:1512px" width="30" height="60"><path d="M8 18L15 8L22 18Z" fill="#8a8a8a"/><path d="M2 30H28" stroke="#d0d0d0" stroke-width="1"/></svg>
<svg class="abs" style="left:2022px;top:1550px" width="32" height="24"><rect x="0" y="0" width="32" height="24" fill="#fff" stroke="#c8c8c8"/><path d="M8 22L28 4M15 22L28 11M22 22L28 17" stroke="#999" stroke-width="1.6"/></svg>
<div class="abs" style="left:8px;top:1573px;width:2042px;height:9px;background:#2c2d31;border-top:2px solid #bdbdbd"></div>
<div class="abs pin" style="left:23px;top:52px;width:1574px;height:1190px;border-radius:12px 12px 0 0;box-shadow:0 10px 16px rgba(0,0,0,0.7);border:1px solid #9a9a9a;border-top-color:#d0d0d0"></div>
<div class="abs" style="left:24px;top:95px;width:1572px;height:2px;background:#8a8a8a"></div>
<div class="abs" style="left:41px;top:62px;width:27px;height:27px;border-radius:50%;border:2px solid #9a9a9a;background:radial-gradient(circle at 50% 75%,#ffffff 0%,#e6e6e6 35%,#c8c8c8 100%)"></div>
<div class="abs" style="left:83px;top:62px;width:27px;height:27px;border-radius:50%;border:2px solid #9a9a9a;background:radial-gradient(circle at 50% 75%,#ffffff 0%,#e6e6e6 35%,#c8c8c8 100%)"></div>
<div class="abs" style="left:125px;top:62px;width:27px;height:27px;border-radius:50%;border:2px solid #9a9a9a;background:radial-gradient(circle at 50% 75%,#ffffff 0%,#e6e6e6 35%,#c8c8c8 100%)"></div>
<svg class="abs" style="left:1020px;top:1241px" width="14" height="10"><path d="M2 8Q7 -1 12 8" stroke="#111" stroke-width="3" fill="none"/></svg>
<div class="abs" style="left:240px;top:157px;width:1298px;height:743px;background:#fff;border:2px solid #000;border-top-width:3px"></div>
<div class="abs" style="left:240px;top:998px;width:1298px;height:146px;background:#fff;border:2px solid #000;border-top-width:3px"></div>
<svg class="abs" style="left:0;top:0" width="2054" height="1582"><path d="M240 883h6M243 880v6M238 877h6M241 874v6M238 879h6M241 876v6M242 876h6M245 873v6M238 881h6M241 878v6M240 876h6M243 873v6M243 875h6M246 872v6M244 880h6M247 877v6M243 884h6M246 881v6M241 880h6M244 877v6M246 884h6M249 881v6M245 876h6M248 873v6M242 879h6M245 876v6M243 878h6M246 875v6M244 872h6M247 869v6M248 881h6M251 878v6M246 871h6M249 868v6M244 875h6M247 872v6M248 875h6M251 872v6M244 876h6M247 873v6M250 876h6M253 873v6M250 871h6M253 868v6M247 871h6M250 868v6M248 877h6M251 874v6M249 873h6M252 870v6M250 874h6M253 871v6M249 879h6M252 876v6M249 869h6M252 866v6M248 871h6M251 868v6M250 874h6M253 871v6M253 873h6M256 870v6M250 890h6M253 887v6M254 869h6M257 866v6M251 880h6M254 877v6M253 865h6M256 862v6M252 882h6M255 879v6M256 866h6M259 863v6M254 871h6M257 868v6M254 873h6M257 870v6M256 869h6M259 866v6M257 877h6M260 874v6M256 876h6M259 873v6M257 874h6M260 871v6M256 873h6M259 870v6M258 884h6M261 881v6M258 873h6M261 870v6M259 877h6M262 874v6M259 870h6M262 867v6M258 875h6M261 872v6M256 875h6M259 872v6M259 872h6M262 869v6M259 869h6M262 866v6M261 863h6M264 860v6M258 878h6M261 875v6M259 865h6M262 862v6M261 870h6M264 867v6M263 871h6M266 868v6M263 865h6M266 862v6M262 866h6M265 863v6M261 864h6M264 861v6M263 865h6M266 862v6M263 864h6M266 861v6M262 856h6M265 853v6M264 863h6M267 860v6M264 868h6M267 865v6M266 852h6M269 849v6M268 841h6M271 838v6M268 847h6M271 844v6M268 848h6M271 845v6M267 845h6M270 842v6M270 823h6M273 820v6M266 830h6M269 827v6M269 825h6M272 822v6M266 825h6M269 822v6M267 824h6M270 821v6M270 739h6M273 736v6M272 517h6M275 514v6M271 664h6M274 661v6M269 582h6M272 579v6M274 558h6M277 555v6M276 756h6M279 753v6M275 624h6M278 621v6M277 687h6M280 684v6M278 835h6M281 832v6M280 829h6M283 826v6M279 832h6M282 829v6M279 826h6M282 823v6M277 831h6M280 828v6M278 852h6M281 849v6M281 844h6M284 841v6M279 849h6M282 846v6M282 852h6M285 849v6M280 856h6M283 853v6M280 866h6M283 863v6M284 859h6M287 856v6M280 868h6M283 865v6M282 851h6M285 848v6M282 860h6M285 857v6M283 857h6M286 854v6M284 864h6M287 861v6M283 859h6M286 856v6M283 860h6M286 857v6M283 869h6M286 866v6M285 860h6M288 857v6M285 863h6M288 860v6M284 867h6M287 864v6M284 869h6M287 866v6M285 862h6M288 859v6M290 874h6M293 871v6M288 867h6M291 864v6M288 871h6M291 868v6M289 870h6M292 867v6M287 866h6M290 863v6M292 874h6M295 871v6M288 862h6M291 859v6M288 870h6M291 867v6M288 877h6M291 874v6M289 864h6M292 861v6M293 873h6M296 870v6M292 865h6M295 862v6M290 873h6M293 870v6M293 856h6M296 853v6M293 859h6M296 856v6M293 875h6M296 872v6M293 869h6M296 866v6M296 868h6M299 865v6M295 869h6M298 866v6M296 865h6M299 862v6M297 864h6M300 861v6M298 862h6M301 859v6M298 867h6M301 864v6M294 867h6M297 864v6M298 866h6M301 863v6M297 861h6M300 858v6M297 867h6M300 864v6M300 864h6M303 861v6M297 864h6M300 861v6M300 859h6M303 856v6M301 861h6M304 858v6M300 858h6M303 855v6M301 855h6M304 852v6M302 852h6M305 849v6M301 865h6M304 862v6M301 845h6M304 842v6M304 858h6M307 855v6M303 859h6M306 856v6M301 847h6M304 844v6M301 849h6M304 846v6M303 849h6M306 846v6M302 850h6M305 847v6M306 852h6M309 849v6M306 848h6M309 845v6M306 836h6M309 833v6M308 829h6M311 826v6M304 829h6M307 826v6M304 833h6M307 830v6M308 827h6M311 824v6M304 829h6M307 826v6M308 794h6M311 791v6M310 724h6M313 721v6M312 517h6M315 514v6M311 655h6M314 652v6M310 583h6M313 580v6M314 173h6M317 170v6M312 429h6M315 426v6M313 345h6M316 342v6M312 266h6M315 263v6M316 227h6M319 224v6M318 560h6M321 557v6M318 315h6M321 312v6M317 391h6M320 388v6M319 479h6M322 476v6M320 737h6M323 734v6M321 650h6M324 647v6M322 802h6M325 799v6M323 834h6M326 831v6M324 838h6M327 835v6M325 839h6M328 836v6M323 831h6M326 828v6M325 829h6M328 826v6M325 856h6M328 853v6M325 846h6M328 843v6M327 851h6M330 848v6M327 846h6M330 843v6M325 845h6M328 842v6M328 857h6M331 854v6M326 852h6M329 849v6M326 860h6M329 857v6M329 851h6M332 848v6M330 861h6M333 858v6M328 869h6M331 866v6M329 868h6M332 865v6M328 864h6M331 861v6M329 862h6M332 859v6M330 861h6M333 858v6M332 855h6M335 852v6M333 871h6M336 868v6M334 873h6M337 870v6M333 863h6M336 860v6M330 862h6M333 859v6M333 865h6M336 862v6M332 867h6M335 864v6M332 867h6M335 864v6M333 864h6M336 861v6M332 866h6M335 863v6M334 870h6M337 867v6M336 873h6M339 870v6M336 868h6M339 865v6M338 872h6M341 869v6M335 872h6M338 869v6M336 873h6M339 870v6M337 868h6M340 865v6M337 875h6M340 872v6M340 866h6M343 863v6M337 867h6M340 864v6M339 875h6M342 872v6M340 869h6M343 866v6M340 870h6M343 867v6M338 877h6M341 874v6M342 870h6M345 867v6M341 866h6M344 863v6M343 869h6M346 866v6M340 865h6M343 862v6M343 863h6M346 860v6M344 872h6M347 869v6M346 864h6M349 861v6M344 863h6M347 860v6M344 856h6M347 853v6M343 873h6M346 870v6M343 862h6M346 859v6M347 882h6M350 879v6M345 866h6M348 863v6M344 875h6M347 872v6M346 871h6M349 868v6M347 869h6M350 866v6M349 867h6M352 864v6M350 863h6M353 860v6M347 861h6M350 858v6M348 868h6M351 865v6M348 866h6M351 863v6M351 864h6M354 861v6M350 860h6M353 857v6M352 859h6M355 856v6M350 861h6M353 858v6M349 860h6M352 857v6M353 848h6M356 845v6M350 842h6M353 839v6M351 849h6M354 846v6M351 847h6M354 844v6M352 848h6M355 845v6M354 808h6M357 805v6M356 699h6M359 696v6M355 754h6M358 751v6M358 714h6M361 711v6M360 792h6M363 789v6M362 794h6M365 791v6M364 691h6M367 688v6M361 740h6M364 737v6M366 419h6M369 416v6M365 620h6M368 617v6M364 558h6M367 555v6M364 483h6M367 480v6M368 477h6M371 474v6M370 725h6M373 722v6M371 562h6M374 559v6M371 646h6M374 643v6M374 810h6M377 807v6M374 810h6M377 807v6M371 823h6M374 820v6M374 811h6M377 808v6M370 819h6M373 816v6M373 765h6M376 762v6M373 845h6M376 842v6M374 845h6M377 842v6M372 840h6M375 837v6M372 848h6M375 845v6M372 839h6M375 836v6M377 850h6M380 847v6M376 865h6M379 862v6M378 856h6M381 853v6M378 861h6M381 858v6M377 859h6M380 856v6M378 865h6M381 862v6M377 852h6M380 849v6M377 862h6M380 859v6M379 868h6M382 865v6M379 862h6M382 859v6M380 862h6M383 859v6M378 858h6M381 855v6M378 859h6M381 856v6M382 866h6M385 863v6M380 867h6M383 864v6M384 863h6M387 860v6M380 864h6M383 861v6M383 863h6M386 860v6M381 871h6M384 868v6M383 862h6M386 859v6M385 868h6M388 865v6M385 860h6M388 857v6M386 863h6M389 860v6M383 861h6M386 858v6M385 864h6M388 861v6M384 855h6M387 852v6M388 858h6M391 855v6M387 861h6M390 858v6M385 856h6M388 853v6M384 853h6M387 850v6M390 838h6M393 835v6M388 841h6M391 838v6M390 838h6M393 835v6M388 845h6M391 842v6M387 834h6M390 831v6M390 773h6M393 770v6M392 607h6M395 604v6M390 692h6M393 689v6M394 640h6M397 637v6M396 789h6M399 786v6M396 716h6M399 713v6M397 840h6M400 837v6M396 847h6M399 844v6M398 853h6M401 850v6M399 844h6M402 841v6M396 847h6M399 844v6M398 859h6M401 856v6M400 860h6M403 857v6M401 862h6M404 859v6M402 870h6M405 867v6M400 865h6M403 862v6M400 867h6M403 864v6M402 868h6M405 865v6M401 867h6M404 864v6M404 871h6M407 868v6M402 869h6M405 866v6M405 875h6M408 872v6M402 873h6M405 870v6M406 864h6M409 861v6M406 871h6M409 868v6M405 872h6M408 869v6M407 870h6M410 867v6M406 870h6M409 867v6M407 883h6M410 880v6M405 876h6M408 873v6M405 868h6M408 865v6M408 874h6M411 871v6M408 872h6M411 869v6M408 860h6M411 857v6M409 871h6M412 868v6M410 870h6M413 867v6M411 879h6M414 876v6M408 879h6M411 876v6M409 865h6M412 862v6M412 874h6M415 871v6M409 870h6M412 867v6M413 876h6M416 873v6M413 877h6M416 874v6M410 877h6M413 874v6M411 873h6M414 870v6M411 876h6M414 873v6M414 874h6M417 871v6M412 881h6M415 878v6M415 869h6M418 866v6M413 880h6M416 877v6M415 874h6M418 871v6M417 883h6M420 880v6M416 871h6M419 868v6M418 873h6M421 870v6M418 868h6M421 865v6M415 868h6M418 865v6M416 874h6M419 871v6M419 878h6M422 875v6M419 871h6M422 868v6M416 876h6M419 873v6M417 882h6M420 879v6M421 876h6M424 873v6M422 872h6M425 869v6M422 874h6M425 871v6M421 878h6M424 875v6M418 874h6M421 871v6M421 877h6M424 874v6M420 879h6M423 876v6M423 881h6M426 878v6M420 878h6M423 875v6M421 875h6M424 872v6M424 883h6M427 880v6M423 868h6M426 865v6M425 868h6M428 865v6M422 876h6M425 873v6M426 875h6M429 872v6M425 866h6M428 863v6M428 871h6M431 868v6M424 873h6M427 870v6M427 869h6M430 866v6M426 876h6M429 873v6M427 859h6M430 856v6M429 855h6M432 852v6M426 860h6M429 857v6M429 860h6M432 857v6M426 857h6M429 854v6M429 838h6M432 835v6M431 845h6M434 842v6M428 845h6M431 842v6M430 852h6M433 849v6M429 837h6M432 834v6M433 846h6M436 843v6M432 844h6M435 841v6M432 842h6M435 839v6M434 851h6M437 848v6M431 848h6M434 845v6M434 855h6M437 852v6M435 852h6M438 849v6M433 854h6M436 851v6M432 865h6M435 862v6M436 852h6M439 849v6M435 852h6M438 849v6M437 846h6M440 843v6M438 856h6M441 853v6M435 854h6M438 851v6M434 851h6M437 848v6M440 834h6M443 831v6M436 834h6M439 831v6M437 825h6M440 822v6M438 840h6M441 837v6M436 845h6M439 842v6M440 823h6M443 820v6M439 828h6M442 825v6M441 834h6M444 831v6M438 820h6M441 817v6M440 831h6M443 828v6M442 806h6M445 803v6M444 695h6M447 692v6M441 753h6M444 750v6M446 412h6M449 409v6M444 617h6M447 614v6M445 558h6M448 555v6M443 478h6M446 475v6M448 469h6M451 466v6M450 720h6M453 717v6M449 558h6M452 555v6M449 636h6M452 633v6M454 814h6M457 811v6M453 819h6M456 816v6M453 822h6M456 819v6M450 815h6M453 812v6M453 815h6M456 812v6M451 766h6M454 763v6M452 851h6M455 848v6M454 847h6M457 844v6M456 848h6M459 845v6M454 844h6M457 841v6M456 850h6M459 847v6M454 858h6M457 855v6M456 867h6M459 864v6M456 857h6M459 854v6M458 867h6M461 864v6M454 863h6M457 860v6M459 866h6M462 863v6M459 870h6M462 867v6M458 864h6M461 861v6M459 866h6M462 863v6M459 863h6M462 860v6M459 880h6M462 877v6M460 869h6M463 866v6M459 865h6M462 862v6M460 866h6M463 863v6M461 863h6M464 860v6M460 878h6M463 875v6M464 874h6M467 871v6M461 879h6M464 876v6M463 872h6M466 869v6M464 871h6M467 868v6M466 866h6M469 863v6M462 885h6M465 882v6M462 872h6M465 869v6M462 874h6M465 871v6M465 864h6M468 861v6M467 873h6M470 870v6M465 873h6M468 870v6M468 878h6M471 875v6M465 873h6M468 870v6M464 863h6M467 860v6M468 870h6M471 867v6M468 878h6M471 875v6M468 872h6M471 869v6M467 869h6M470 866v6M467 872h6M470 869v6M472 870h6M475 867v6M469 865h6M472 862v6M469 872h6M472 869v6M472 860h6M475 857v6M468 866h6M471 863v6M473 854h6M476 851v6M473 852h6M476 849v6M471 858h6M474 855v6M470 843h6M473 840v6M472 852h6M475 849v6M476 857h6M479 854v6M476 856h6M479 853v6M476 857h6M479 854v6M473 852h6M476 849v6M472 857h6M475 854v6M474 864h6M477 861v6M476 863h6M479 860v6M475 874h6M478 871v6M474 870h6M477 867v6M475 871h6M478 868v6M477 874h6M480 871v6M476 876h6M479 873v6M478 869h6M481 866v6M477 872h6M480 869v6M476 872h6M479 869v6M481 873h6M484 870v6M478 874h6M481 871v6M481 873h6M484 870v6M482 872h6M485 869v6M478 872h6M481 869v6M482 871h6M485 868v6M483 883h6M486 880v6M483 875h6M486 872v6M480 873h6M483 870v6M482 881h6M485 878v6M485 866h6M488 863v6M484 880h6M487 877v6M483 871h6M486 868v6M482 878h6M485 875v6M485 879h6M488 876v6M484 872h6M487 869v6M487 871h6M490 868v6M485 873h6M488 870v6M485 881h6M488 878v6M487 876h6M490 873v6M486 864h6M489 861v6M490 869h6M493 866v6M487 877h6M490 874v6M490 878h6M493 875v6M487 877h6M490 874v6M491 873h6M494 870v6M489 871h6M492 868v6M488 883h6M491 880v6M491 871h6M494 868v6M491 880h6M494 877v6M490 879h6M493 876v6M491 869h6M494 866v6M491 868h6M494 865v6M491 868h6M494 865v6M493 874h6M496 871v6M495 875h6M498 872v6M496 874h6M499 871v6M493 875h6M496 872v6M493 881h6M496 878v6M493 870h6M496 867v6M494 877h6M497 874v6M494 863h6M497 860v6M496 874h6M499 871v6M498 874h6M501 871v6M496 867h6M499 864v6M497 863h6M500 860v6M499 862h6M502 859v6M500 869h6M503 866v6M499 866h6M502 863v6M499 866h6M502 863v6M501 861h6M504 858v6M501 869h6M504 866v6M499 862h6M502 859v6M498 856h6M501 853v6M499 857h6M502 854v6M503 853h6M506 850v6M504 848h6M507 845v6M501 849h6M504 846v6M500 853h6M503 850v6M504 847h6M507 844v6M502 828h6M505 825v6M505 825h6M508 822v6M503 825h6M506 822v6M506 823h6M509 820v6M502 828h6M505 825v6M506 741h6M509 738v6M508 511h6M511 508v6M505 663h6M508 660v6M507 591h6M510 588v6M510 516h6M513 513v6M512 623h6M515 620v6M512 572h6M515 569v6M514 710h6M517 707v6M516 810h6M519 807v6M516 760h6M519 757v6M518 840h6M521 837v6M520 849h6M523 846v6M520 842h6M523 839v6M518 841h6M521 838v6M518 841h6M521 838v6M518 858h6M521 855v6M520 861h6M523 858v6M520 858h6M523 855v6M520 854h6M523 851v6M518 856h6M521 853v6M522 859h6M525 856v6M523 855h6M526 852v6M520 859h6M523 856v6M522 868h6M525 865v6M523 861h6M526 858v6M524 861h6M527 858v6M526 877h6M529 874v6M523 857h6M526 854v6M525 869h6M528 866v6M523 866h6M526 863v6M524 868h6M527 865v6M526 862h6M529 859v6M528 857h6M531 854v6M526 860h6M529 857v6M525 852h6M528 849v6M527 852h6M530 849v6M529 861h6M532 858v6M530 853h6M533 850v6M529 855h6M532 852v6M527 853h6M530 850v6M528 835h6M531 832v6M528 832h6M531 829v6M532 834h6M535 831v6M530 831h6M533 828v6M530 835h6M533 832v6M532 768h6M535 765v6M534 585h6M537 582v6M533 709h6M536 706v6M531 645h6M534 642v6M536 623h6M539 620v6M538 784h6M541 781v6M537 702h6M540 699v6M539 842h6M542 839v6M540 839h6M543 836v6M538 844h6M541 841v6M538 838h6M541 835v6M540 837h6M543 834v6M544 856h6M547 853v6M544 855h6M547 852v6M543 859h6M546 856v6M540 870h6M543 867v6M540 854h6M543 851v6M543 865h6M546 862v6M543 874h6M546 871v6M542 869h6M545 866v6M546 855h6M549 852v6M543 862h6M546 859v6M547 872h6M550 869v6M548 876h6M551 873v6M547 871h6M550 868v6M546 867h6M549 864v6M544 869h6M547 866v6M549 873h6M552 870v6M550 881h6M553 878v6M549 872h6M552 869v6M546 871h6M549 868v6M547 866h6M550 863v6M548 873h6M551 870v6M548 880h6M551 877v6M550 882h6M553 879v6M550 866h6M553 863v6M548 872h6M551 869v6M553 880h6M556 877v6M554 878h6M557 875v6M551 873h6M554 870v6M550 874h6M553 871v6M552 873h6M555 870v6M553 876h6M556 873v6M553 871h6M556 868v6M554 876h6M557 873v6M556 879h6M559 876v6M553 867h6M556 864v6M558 881h6M561 878v6M557 868h6M560 865v6M554 876h6M557 873v6M554 867h6M557 864v6M558 878h6M561 875v6M558 876h6M561 873v6M560 870h6M563 867v6M556 872h6M559 869v6M556 873h6M559 870v6M556 880h6M559 877v6M559 879h6M562 876v6M560 882h6M563 879v6M558 873h6M561 870v6M558 879h6M561 876v6M558 880h6M561 877v6M560 874h6M563 871v6M564 872h6M567 869v6M562 878h6M565 875v6M564 886h6M567 883v6M560 880h6M563 877v6M565 868h6M568 865v6M562 874h6M565 871v6M562 877h6M565 874v6M562 884h6M565 881v6M562 870h6M565 867v6M566 870h6M569 867v6M565 873h6M568 870v6M566 871h6M569 868v6M564 878h6M567 875v6M566 873h6M569 870v6M568 876h6M571 873v6M568 873h6M571 870v6M569 865h6M572 862v6M568 871h6M571 868v6M569 871h6M572 868v6M568 862h6M571 859v6M570 874h6M573 871v6M571 869h6M574 866v6M569 864h6M572 861v6M568 867h6M571 864v6M573 866h6M576 863v6M570 864h6M573 861v6M570 867h6M573 864v6M570 867h6M573 864v6M571 870h6M574 867v6M575 854h6M578 851v6M576 857h6M579 854v6M574 862h6M577 859v6M573 863h6M576 860v6M573 862h6M576 859v6M574 858h6M577 855v6M577 860h6M580 857v6M574 850h6M577 847v6M576 855h6M579 852v6M577 862h6M580 859v6M576 839h6M579 836v6M578 848h6M581 845v6M577 843h6M580 840v6M580 850h6M583 847v6M580 852h6M583 849v6M579 827h6M582 824v6M581 819h6M584 816v6M582 819h6M585 816v6M578 812h6M581 809v6M579 818h6M582 815v6M582 713h6M585 710v6M581 760h6M584 757v6M584 451h6M587 448v6M582 622h6M585 619v6M583 538h6M586 535v6M586 494h6M589 491v6M588 724h6M591 721v6M589 575h6M592 572v6M587 644h6M590 641v6M590 796h6M593 793v6M592 780h6M595 777v6M594 673h6M597 670v6M593 730h6M596 727v6M596 701h6M599 698v6M598 795h6M601 792v6M599 751h6M602 748v6M600 815h6M603 812v6M599 816h6M602 813v6M600 821h6M603 818v6M598 811h6M601 808v6M599 815h6M602 812v6M602 759h6M605 756v6M604 597h6M607 594v6M602 688h6M605 685v6M606 634h6M609 631v6M608 779h6M611 776v6M607 715h6M610 712v6M610 844h6M613 841v6M609 841h6M612 838v6M608 833h6M611 830v6M611 840h6M614 837v6M609 833h6M612 830v6M614 857h6M617 854v6M610 852h6M613 849v6M611 852h6M614 849v6M610 861h6M613 858v6M611 857h6M614 854v6M616 855h6M619 852v6M616 858h6M619 855v6M613 852h6M616 849v6M616 862h6M619 859v6M612 852h6M615 849v6M617 851h6M620 848v6M614 857h6M617 854v6M617 855h6M620 852v6M615 860h6M618 857v6M616 858h6M619 855v6M616 830h6M619 827v6M620 838h6M623 835v6M617 830h6M620 827v6M618 835h6M621 832v6M619 829h6M622 826v6M620 775h6M623 772v6M622 785h6M625 782v6M624 834h6M627 831v6M623 837h6M626 834v6M626 832h6M629 829v6M625 845h6M628 842v6M626 839h6M629 836v6M624 855h6M627 852v6M626 845h6M629 842v6M627 849h6M630 846v6M625 853h6M628 850v6M628 850h6M631 847v6M626 829h6M629 826v6M626 824h6M629 821v6M628 830h6M631 827v6M626 835h6M629 832v6M626 826h6M629 823v6M630 765h6M633 762v6M632 778h6M635 775v6M634 836h6M637 833v6M632 842h6M635 839v6M636 849h6M639 846v6M633 853h6M636 850v6M635 840h6M638 837v6M635 869h6M638 866v6M634 873h6M637 870v6M635 857h6M638 854v6M635 864h6M638 861v6M635 859h6M638 856v6M639 875h6M642 872v6M639 878h6M642 875v6M637 869h6M640 866v6M639 864h6M642 861v6M638 877h6M641 874v6M641 867h6M644 864v6M639 859h6M642 856v6M641 880h6M644 877v6M640 873h6M643 870v6M640 873h6M643 870v6M643 878h6M646 875v6M643 868h6M646 865v6M642 877h6M645 874v6M641 883h6M644 880v6M640 870h6M643 867v6M642 880h6M645 877v6M643 865h6M646 862v6M646 878h6M649 875v6M642 869h6M645 866v6M642 875h6M645 872v6M646 877h6M649 874v6M646 870h6M649 867v6M645 871h6M648 868v6M645 876h6M648 873v6M645 871h6M648 868v6M647 883h6M650 880v6M647 871h6M650 868v6M650 881h6M653 878v6M646 871h6M649 868v6M650 878h6M653 875v6M649 866h6M652 863v6M651 874h6M654 871v6M651 870h6M654 867v6M648 872h6M651 869v6M649 874h6M652 871v6M651 869h6M654 866v6M653 877h6M656 874v6M653 882h6M656 879v6M651 871h6M654 868v6M653 879h6M656 876v6M652 881h6M655 878v6M653 878h6M656 875v6M656 871h6M659 868v6M655 871h6M658 868v6M654 867h6M657 864v6M657 864h6M660 861v6M654 881h6M657 878v6M655 870h6M658 867v6M654 870h6M657 867v6M654 869h6M657 866v6M658 869h6M661 866v6M656 869h6M659 866v6M657 874h6M660 871v6M656 875h6M659 872v6M657 879h6M660 876v6M660 879h6M663 876v6M660 877h6M663 874v6M661 874h6M664 871v6M659 867h6M662 864v6M660 868h6M663 865v6M664 873h6M667 870v6M660 873h6M663 870v6M663 868h6M666 865v6M663 864h6M666 861v6M664 884h6M667 881v6M664 875h6M667 872v6M662 867h6M665 864v6M664 871h6M667 868v6M663 875h6M666 872v6M666 870h6M669 867v6M664 861h6M667 858v6M667 860h6M670 857v6M668 851h6M671 848v6M668 866h6M671 863v6M664 863h6M667 860v6M666 850h6M669 847v6M670 857h6M673 854v6M666 849h6M669 846v6M670 835h6M673 832v6M669 841h6M672 838v6M670 790h6M673 787v6M672 644h6M675 641v6M671 713h6M674 710v6M674 673h6M677 670v6M676 800h6M679 797v6M677 730h6M680 727v6M676 846h6M679 843v6M677 847h6M680 844v6M676 840h6M679 837v6M676 837h6M679 834v6M678 850h6M681 847v6M682 850h6M685 847v6M679 843h6M682 840v6M681 854h6M684 851v6M682 853h6M685 850v6M682 854h6M685 851v6M684 850h6M687 847v6M684 853h6M687 850v6M683 851h6M686 848v6M684 849h6M687 846v6M680 846h6M683 843v6M682 831h6M685 828v6M683 828h6M686 825v6M685 835h6M688 832v6M682 827h6M685 824v6M685 834h6M688 831v6M686 767h6M689 764v6M688 579h6M691 576v6M687 704h6M690 701v6M687 649h6M690 646v6M690 619h6M693 616v6M692 786h6M695 783v6M691 704h6M694 701v6M695 850h6M698 847v6M693 843h6M696 840v6M695 841h6M698 838v6M692 838h6M695 835v6M694 843h6M697 840v6M695 851h6M698 848v6M694 857h6M697 854v6M697 865h6M700 862v6M697 854h6M700 851v6M694 850h6M697 847v6M696 867h6M699 864v6M700 866h6M703 863v6M696 863h6M699 860v6M700 869h6M703 866v6M697 876h6M700 873v6M702 868h6M705 865v6M698 865h6M701 862v6M701 881h6M704 878v6M701 869h6M704 866v6M698 868h6M701 865v6M702 875h6M705 872v6M703 871h6M706 868v6M703 865h6M706 862v6M702 878h6M705 875v6M704 870h6M707 867v6M706 876h6M709 873v6M706 869h6M709 866v6M702 878h6M705 875v6M703 869h6M706 866v6M705 870h6M708 867v6M705 864h6M708 861v6M708 875h6M711 872v6M705 871h6M708 868v6M704 866h6M707 863v6M706 869h6M709 866v6M710 867h6M713 864v6M706 861h6M709 858v6M710 865h6M713 862v6M707 861h6M710 858v6M710 872h6M713 869v6M711 863h6M714 860v6M712 866h6M715 863v6M711 865h6M714 862v6M709 861h6M712 858v6M710 858h6M713 855v6M713 867h6M716 864v6M711 877h6M714 874v6M710 868h6M713 865v6M713 869h6M716 866v6M712 872h6M715 869v6M712 875h6M715 872v6M714 881h6M717 878v6M716 872h6M719 869v6M713 880h6M716 877v6M713 875h6M716 872v6M716 877h6M719 874v6M716 871h6M719 868v6M718 873h6M721 870v6M715 875h6M718 872v6M717 886h6M720 883v6M718 878h6M721 875v6M719 871h6M722 868v6M716 879h6M719 876v6M718 880h6M721 877v6M718 874h6M721 871v6M718 873h6M721 870v6M719 884h6M722 881v6M721 873h6M724 870v6M722 870h6M725 867v6M720 872h6M723 869v6M723 874h6M726 871v6M724 873h6M727 870v6M724 874h6M727 871v6M720 869h6M723 866v6M722 871h6M725 868v6M722 861h6M725 858v6M722 864h6M725 861v6M725 860h6M728 857v6M725 868h6M728 865v6M722 854h6M725 851v6M728 821h6M731 818v6M724 819h6M727 816v6M726 826h6M729 823v6M724 831h6M727 828v6M728 824h6M731 821v6M727 837h6M730 834v6M728 848h6M731 845v6M727 830h6M730 827v6M727 837h6M730 834v6M728 834h6M731 831v6M728 868h6M731 865v6M728 853h6M731 850v6M730 861h6M733 858v6M731 852h6M734 849v6M728 863h6M731 860v6M730 872h6M733 869v6M731 867h6M734 864v6M734 866h6M737 863v6M733 869h6M736 866v6M732 867h6M735 864v6M734 871h6M737 868v6M735 874h6M738 871v6M735 873h6M738 870v6M733 875h6M736 872v6M732 861h6M735 858v6M734 872h6M737 869v6M735 873h6M738 870v6M738 869h6M741 866v6M736 872h6M739 869v6M737 868h6M740 865v6M736 869h6M739 866v6M736 862h6M739 859v6M736 860h6M739 857v6M737 866h6M740 863v6M739 868h6M742 865v6M740 847h6M743 844v6M739 844h6M742 841v6M741 841h6M744 838v6M742 848h6M745 845v6M739 841h6M742 838v6M742 795h6M745 792v6M744 806h6M747 803v6M745 855h6M748 852v6M746 850h6M749 847v6M746 850h6M749 847v6M744 845h6M747 842v6M746 843h6M749 840v6M747 868h6M750 865v6M750 877h6M753 874v6M747 870h6M750 867v6M750 863h6M753 860v6M748 867h6M751 864v6M749 877h6M752 874v6M750 871h6M753 868v6M749 874h6M752 871v6M750 871h6M753 868v6M751 874h6M754 871v6M752 873h6M755 870v6M751 875h6M754 872v6M754 874h6M757 871v6M752 869h6M755 866v6M754 874h6M757 871v6M754 878h6M757 875v6M755 880h6M758 877v6M753 875h6M756 872v6M753 879h6M756 876v6M756 876h6M759 873v6M755 868h6M758 865v6M758 878h6M761 875v6M758 877h6M761 874v6M757 876h6M760 873v6M755 873h6M758 870v6M760 872h6M763 869v6M757 870h6M760 867v6M760 876h6M763 873v6M760 877h6M763 874v6M759 882h6M762 879v6M762 866h6M765 863v6M760 871h6M763 868v6M761 884h6M764 881v6M758 886h6M761 883v6M761 877h6M764 874v6M761 877h6M764 874v6M761 872h6M764 869v6M764 877h6M767 874v6M761 870h6M764 867v6M762 866h6M765 863v6M764 868h6M767 865v6M766 885h6M769 882v6M762 867h6M765 864v6M762 871h6M765 868v6M764 876h6M767 873v6M767 860h6M770 857v6M766 864h6M769 861v6M764 875h6M767 872v6M768 868h6M771 865v6M764 863h6M767 860v6M766 859h6M769 856v6M767 864h6M770 861v6M767 859h6M770 856v6M767 863h6M770 860v6M766 862h6M769 859v6M768 834h6M771 831v6M769 832h6M772 829v6M770 835h6M773 832v6M772 829h6M775 826v6M771 820h6M774 817v6M772 740h6M775 737v6M774 760h6M777 757v6M775 841h6M778 838v6M774 834h6M777 831v6M778 840h6M781 837v6M778 835h6M781 832v6M774 832h6M777 829v6M779 867h6M782 864v6M777 858h6M780 855v6M777 866h6M780 863v6M779 867h6M782 864v6M777 863h6M780 860v6M781 870h6M784 867v6M781 864h6M784 861v6M778 866h6M781 863v6M781 872h6M784 869v6M780 870h6M783 867v6M782 866h6M785 863v6M783 879h6M786 876v6M784 877h6M787 874v6M783 863h6M786 860v6M784 879h6M787 876v6M784 877h6M787 874v6M783 880h6M786 877v6M782 870h6M785 867v6M784 877h6M787 874v6M784 877h6M787 874v6M787 878h6M790 875v6M785 883h6M788 880v6M785 871h6M788 868v6M787 878h6M790 875v6M784 879h6M787 876v6M786 866h6M789 863v6M786 881h6M789 878v6M790 871h6M793 868v6M788 870h6M791 867v6M786 870h6M789 867v6M792 878h6M795 875v6M788 878h6M791 875v6M791 876h6M794 873v6M788 878h6M791 875v6M790 875h6M793 872v6M790 879h6M793 876v6M794 887h6M797 884v6M792 873h6M795 870v6M790 870h6M793 867v6M791 877h6M794 874v6M795 878h6M798 875v6M794 878h6M797 875v6M795 872h6M798 869v6M792 874h6M795 871v6M796 875h6M799 872v6M798 881h6M801 878v6M795 873h6M798 870v6M796 873h6M799 870v6M797 879h6M800 876v6M797 873h6M800 870v6M799 875h6M802 872v6M798 873h6M801 870v6M797 877h6M800 874v6M800 880h6M803 877v6M799 879h6M802 876v6M799 873h6M802 870v6M800 867h6M803 864v6M800 871h6M803 868v6M799 870h6M802 867v6M799 881h6M802 878v6M804 879h6M807 876v6M803 874h6M806 871v6M800 861h6M803 858v6M802 869h6M805 866v6M800 855h6M803 852v6M803 863h6M806 860v6M805 863h6M808 860v6M803 869h6M806 866v6M806 862h6M809 859v6M806 862h6M809 859v6M804 852h6M807 849v6M807 845h6M810 842v6M806 854h6M809 851v6M805 845h6M808 842v6M807 853h6M810 850v6M810 815h6M813 812v6M810 819h6M813 816v6M810 818h6M813 815v6M807 807h6M810 804v6M810 819h6M813 816v6M810 734h6M813 731v6M812 746h6M815 743v6M815 812h6M818 809v6M814 809h6M817 806v6M814 810h6M817 807v6M816 818h6M819 815v6M815 813h6M818 810v6M817 826h6M820 823v6M817 824h6M820 821v6M816 828h6M819 825v6M815 822h6M818 819v6M815 829h6M818 826v6M818 798h6M821 795v6M820 808h6M823 805v6M822 852h6M825 849v6M821 844h6M824 841v6M822 847h6M825 844v6M820 850h6M823 847v6M820 851h6M823 848v6M825 861h6M828 858v6M824 867h6M827 864v6M826 855h6M829 852v6M826 866h6M829 863v6M826 859h6M829 856v6M827 856h6M830 853v6M828 863h6M831 860v6M826 859h6M829 856v6M824 860h6M827 857v6M828 860h6M831 857v6M830 850h6M833 847v6M829 838h6M832 835v6M827 836h6M830 833v6M827 851h6M830 848v6M829 844h6M832 841v6M830 806h6M833 803v6M834 802h6M837 799v6M832 809h6M835 806v6M830 805h6M833 802v6M831 809h6M834 806v6M830 816h6M833 813v6M834 842h6M837 839v6M834 844h6M837 841v6M834 851h6M837 848v6M835 831h6M838 828v6M833 835h6M836 832v6M835 844h6M838 841v6M838 850h6M841 847v6M834 843h6M837 840v6M838 842h6M841 839v6M834 843h6M837 840v6M839 820h6M842 817v6M840 820h6M843 817v6M836 824h6M839 821v6M836 817h6M839 814v6M840 821h6M843 818v6M839 825h6M842 822v6M841 825h6M844 822v6M842 818h6M845 815v6M842 831h6M845 828v6M841 824h6M844 821v6M844 847h6M847 844v6M844 847h6M847 844v6M840 847h6M843 844v6M844 845h6M847 842v6M843 848h6M846 845v6M842 827h6M845 824v6M842 831h6M845 828v6M843 827h6M846 824v6M843 831h6M846 828v6M844 836h6M847 833v6M846 780h6M849 777v6M848 792h6M851 789v6M852 847h6M855 844v6M852 845h6M855 842v6M851 847h6M854 844v6M851 844h6M854 841v6M852 844h6M855 841v6M850 862h6M853 859v6M854 864h6M857 861v6M851 867h6M854 864v6M854 866h6M857 863v6M853 860h6M856 857v6M854 866h6M857 863v6M855 871h6M858 868v6M852 870h6M855 867v6M856 875h6M859 872v6M853 865h6M856 862v6M857 874h6M860 871v6M854 873h6M857 870v6M855 868h6M858 865v6M855 870h6M858 867v6M856 874h6M859 871v6M859 869h6M862 866v6M860 870h6M863 867v6M859 868h6M862 865v6M856 878h6M859 875v6M859 874h6M862 871v6M859 864h6M862 861v6M861 870h6M864 867v6M859 872h6M862 869v6M861 875h6M864 872v6M860 870h6M863 867v6M861 856h6M864 853v6M861 858h6M864 855v6M862 847h6M865 844v6M864 853h6M867 850v6M863 847h6M866 844v6M863 826h6M866 823v6M863 822h6M866 819v6M865 827h6M868 824v6M865 819h6M868 816v6M864 819h6M867 816v6M867 826h6M870 823v6M867 830h6M870 827v6M865 847h6M868 844v6M868 824h6M871 821v6M867 826h6M870 823v6M867 856h6M870 853v6M869 856h6M872 853v6M866 857h6M869 854v6M870 867h6M873 864v6M869 864h6M872 861v6M868 867h6M871 864v6M870 865h6M873 862v6M868 869h6M871 866v6M869 872h6M872 869v6M869 867h6M872 864v6M870 881h6M873 878v6M870 870h6M873 867v6M874 872h6M877 869v6M872 877h6M875 874v6M870 881h6M873 878v6M873 873h6M876 870v6M875 884h6M878 881v6M874 869h6M877 866v6M875 883h6M878 880v6M873 878h6M876 875v6M876 875h6M879 872v6M876 877h6M879 874v6M877 875h6M880 872v6M875 881h6M878 878v6M874 876h6M877 873v6M877 875h6M880 872v6M880 880h6M883 877v6M877 876h6M880 873v6M876 874h6M879 871v6M880 878h6M883 875v6M880 878h6M883 875v6M879 874h6M882 871v6M880 876h6M883 873v6M879 872h6M882 869v6M881 874h6M884 871v6M884 874h6M887 871v6M884 880h6M887 877v6M882 877h6M885 874v6M882 873h6M885 870v6M880 879h6M883 876v6M882 868h6M885 865v6M883 872h6M886 869v6M884 871h6M887 868v6M883 873h6M886 870v6M882 868h6M885 865v6M887 865h6M890 862v6M888 862h6M891 859v6M885 866h6M888 863v6M887 869h6M890 866v6M887 874h6M890 871v6M889 845h6M892 842v6M890 856h6M893 853v6M889 851h6M892 848v6M890 853h6M893 850v6M889 841h6M892 838v6M890 798h6M893 795v6M892 798h6M895 795v6M896 820h6M899 817v6M893 826h6M896 823v6M896 819h6M899 816v6M893 833h6M896 830v6M894 819h6M897 816v6M896 840h6M899 837v6M895 844h6M898 841v6M897 844h6M900 841v6M895 838h6M898 835v6M897 838h6M900 835v6M897 865h6M900 862v6M898 859h6M901 856v6M897 863h6M900 860v6M900 859h6M903 856v6M897 856h6M900 853v6M902 878h6M905 875v6M901 870h6M904 867v6M899 867h6M902 864v6M902 879h6M905 876v6M901 868h6M904 865v6M901 875h6M904 872v6M902 875h6M905 872v6M903 873h6M906 870v6M902 874h6M905 871v6M902 875h6M905 872v6M905 880h6M908 877v6M902 875h6M905 872v6M906 877h6M909 874v6M904 871h6M907 868v6M902 879h6M905 876v6M904 857h6M907 854v6M907 874h6M910 871v6M904 871h6M907 868v6M908 866h6M911 863v6M906 875h6M909 872v6M909 869h6M912 866v6M909 868h6M912 865v6M906 872h6M909 869v6M908 872h6M911 869v6M910 862h6M913 859v6M910 845h6M913 842v6M908 844h6M911 841v6M908 847h6M911 844v6M910 837h6M913 834v6M910 849h6M913 846v6M912 795h6M915 792v6M914 805h6M917 802v6M915 840h6M918 837v6M914 852h6M917 849v6M918 841h6M921 838v6M916 845h6M919 842v6M916 855h6M919 852v6M918 867h6M921 864v6M918 869h6M921 866v6M918 866h6M921 863v6M920 868h6M923 865v6M919 876h6M922 873v6M921 864h6M924 861v6M921 868h6M924 865v6M920 870h6M923 867v6M922 869h6M925 866v6M919 869h6M922 866v6M921 876h6M924 873v6M923 877h6M926 874v6M920 881h6M923 878v6M923 870h6M926 867v6M921 872h6M924 869v6M922 874h6M925 871v6M926 875h6M929 872v6M925 863h6M928 860v6M923 868h6M926 865v6M926 877h6M929 874v6M927 866h6M930 863v6M924 863h6M927 860v6M925 867h6M928 864v6M926 863h6M929 860v6M924 858h6M927 855v6M928 849h6M931 846v6M930 848h6M933 845v6M928 849h6M931 846v6M930 834h6M933 831v6M927 850h6M930 847v6M930 815h6M933 812v6M934 813h6M937 810v6M930 816h6M933 813v6M932 814h6M935 811v6M934 812h6M937 809v6M933 810h6M936 807v6M934 840h6M937 837v6M934 848h6M937 845v6M934 840h6M937 837v6M933 845h6M936 842v6M933 844h6M936 841v6M934 853h6M937 850v6M935 855h6M938 852v6M938 854h6M941 851v6M937 855h6M940 852v6M937 861h6M940 858v6M939 853h6M942 850v6M937 857h6M940 854v6M940 853h6M943 850v6M938 850h6M941 847v6M936 856h6M939 853v6M941 833h6M944 830v6M939 823h6M942 820v6M942 825h6M945 822v6M938 825h6M941 822v6M942 815h6M945 812v6M942 768h6M945 765v6M944 777h6M947 774v6M944 829h6M947 826v6M948 825h6M951 822v6M948 818h6M951 815v6M944 827h6M947 824v6M948 835h6M951 832v6M949 850h6M952 847v6M950 850h6M953 847v6M950 855h6M953 852v6M949 845h6M952 842v6M950 841h6M953 838v6M948 821h6M951 818v6M948 823h6M951 820v6M948 819h6M951 816v6M951 810h6M954 807v6M950 824h6M953 821v6M952 745h6M955 742v6M954 762h6M957 759v6M955 834h6M958 831v6M958 841h6M961 838v6M956 840h6M959 837v6M955 829h6M958 826v6M954 842h6M957 839v6M958 865h6M961 862v6M960 865h6M963 862v6M958 861h6M961 858v6M960 860h6M963 857v6M958 866h6M961 863v6M962 873h6M965 870v6M958 880h6M961 877v6M959 872h6M962 869v6M960 865h6M963 862v6M958 875h6M961 872v6M964 864h6M967 861v6M963 876h6M966 873v6M960 876h6M963 873v6M961 874h6M964 871v6M964 882h6M967 879v6M965 870h6M968 867v6M963 871h6M966 868v6M964 872h6M967 869v6M965 879h6M968 876v6M963 875h6M966 872v6M967 865h6M970 862v6M964 875h6M967 872v6M964 879h6M967 876v6M968 884h6M971 881v6M967 883h6M970 880v6M969 865h6M972 862v6M969 878h6M972 875v6M970 888h6M973 885v6M966 872h6M969 869v6M968 881h6M971 878v6M969 875h6M972 872v6M969 875h6M972 872v6M970 876h6M973 873v6M971 872h6M974 869v6M971 880h6M974 877v6M972 874h6M975 871v6M974 873h6M977 870v6M971 876h6M974 873v6M973 881h6M976 878v6M971 871h6M974 868v6M973 875h6M976 872v6M976 880h6M979 877v6M974 872h6M977 869v6M976 881h6M979 878v6M973 877h6M976 874v6M978 874h6M981 871v6M974 880h6M977 877v6M978 868h6M981 865v6M974 872h6M977 869v6M975 878h6M978 875v6M977 870h6M980 867v6M978 868h6M981 865v6M978 864h6M981 861v6M978 871h6M981 868v6M980 871h6M983 868v6M980 858h6M983 855v6M980 868h6M983 865v6M982 856h6M985 853v6M980 869h6M983 866v6M980 856h6M983 853v6M981 842h6M984 839v6M983 842h6M986 839v6M983 836h6M986 833v6M982 844h6M985 841v6M981 840h6M984 837v6M984 844h6M987 841v6M984 844h6M987 841v6M984 839h6M987 836v6M982 851h6M985 848v6M982 842h6M985 839v6M988 866h6M991 863v6M987 869h6M990 866v6M986 870h6M989 867v6M984 862h6M987 859v6M987 862h6M990 859v6M988 873h6M991 870v6M990 873h6M993 870v6M988 871h6M991 868v6M987 869h6M990 866v6M989 867h6M992 864v6M991 874h6M994 871v6M992 878h6M995 875v6M988 874h6M991 871v6M989 879h6M992 876v6M992 873h6M995 870v6M994 871h6M997 868v6M992 870h6M995 867v6M992 870h6M995 867v6M994 870h6M997 867v6M992 870h6M995 867v6M992 866h6M995 863v6M992 870h6M995 867v6M995 859h6M998 856v6M994 869h6M997 866v6M993 870h6M996 867v6M994 851h6M997 848v6M994 846h6M997 843v6M997 846h6M1000 843v6M998 840h6M1001 837v6M994 857h6M997 854v6M996 826h6M999 823v6M998 817h6M1001 814v6M996 813h6M999 810v6M998 824h6M1001 821v6M997 822h6M1000 819v6M999 825h6M1002 822v6M1002 823h6M1005 820v6M1000 821h6M1003 818v6M1001 819h6M1004 816v6M1002 829h6M1005 826v6M1001 843h6M1004 840v6M1002 841h6M1005 838v6M1001 846h6M1004 843v6M1003 842h6M1006 839v6M1000 847h6M1003 844v6M1006 846h6M1009 843v6M1005 846h6M1008 843v6M1006 849h6M1009 846v6M1004 851h6M1007 848v6M1005 851h6M1008 848v6M1004 820h6M1007 817v6M1006 818h6M1009 815v6M1005 829h6M1008 826v6M1004 825h6M1007 822v6M1004 823h6M1007 820v6M1008 756h6M1011 753v6M1010 769h6M1013 766v6M1011 832h6M1014 829v6M1012 838h6M1015 835v6M1011 831h6M1014 828v6M1011 840h6M1014 837v6M1011 826h6M1014 823v6M1016 866h6M1019 863v6M1013 859h6M1016 856v6M1015 863h6M1018 860v6M1014 856h6M1017 853v6M1015 853h6M1018 850v6M1014 863h6M1017 860v6M1014 862h6M1017 859v6M1017 861h6M1020 858v6M1016 868h6M1019 865v6M1017 864h6M1020 861v6M1019 865h6M1022 862v6M1017 856h6M1020 853v6M1016 858h6M1019 855v6M1019 862h6M1022 859v6M1017 858h6M1020 855v6M1021 841h6M1024 838v6M1020 833h6M1023 830v6M1019 853h6M1022 850v6M1022 839h6M1025 836v6M1020 832h6M1023 829v6M1022 798h6M1025 795v6M1024 804h6M1027 801v6M1026 842h6M1029 839v6M1027 847h6M1030 844v6M1025 847h6M1028 844v6M1028 849h6M1031 846v6M1027 843h6M1030 840v6M1027 861h6M1030 858v6M1028 868h6M1031 865v6M1029 862h6M1032 859v6M1027 857h6M1030 854v6M1028 861h6M1031 858v6M1028 863h6M1031 860v6M1028 859h6M1031 856v6M1029 864h6M1032 861v6M1030 860h6M1033 857v6M1028 862h6M1031 859v6M1033 860h6M1036 857v6M1030 860h6M1033 857v6M1033 869h6M1036 866v6M1032 867h6M1035 864v6M1031 866h6M1034 863v6M1033 874h6M1036 871v6M1032 864h6M1035 861v6M1033 868h6M1036 865v6M1035 871h6M1038 868v6M1032 871h6M1035 868v6M1036 873h6M1039 870v6M1034 877h6M1037 874v6M1037 873h6M1040 870v6M1035 875h6M1038 872v6M1035 875h6M1038 872v6M1040 881h6M1043 878v6M1040 883h6M1043 880v6M1036 867h6M1039 864v6M1036 875h6M1039 872v6M1038 886h6M1041 883v6M1039 876h6M1042 873v6M1038 877h6M1041 874v6M1040 880h6M1043 877v6M1040 879h6M1043 876v6M1042 878h6M1045 875v6M1040 873h6M1043 870v6M1042 881h6M1045 878v6M1042 886h6M1045 883v6M1043 878h6M1046 875v6M1044 877h6M1047 874v6M1045 883h6M1048 880v6M1044 875h6M1047 872v6M1045 881h6M1048 878v6M1045 883h6M1048 880v6M1045 877h6M1048 874v6M1047 882h6M1050 879v6M1044 868h6M1047 865v6M1045 870h6M1048 867v6M1046 871h6M1049 868v6M1048 877h6M1051 874v6M1047 864h6M1050 861v6M1046 885h6M1049 882v6M1046 882h6M1049 879v6M1046 873h6M1049 870v6M1049 882h6M1052 879v6M1052 876h6M1055 873v6M1052 874h6M1055 871v6M1048 872h6M1051 869v6M1051 880h6M1054 877v6M1052 875h6M1055 872v6M1053 884h6M1056 881v6M1051 883h6M1054 880v6M1053 871h6M1056 868v6M1052 878h6M1055 875v6M1054 874h6M1057 871v6M1054 873h6M1057 870v6M1054 874h6M1057 871v6M1052 875h6M1055 872v6M1053 875h6M1056 872v6M1056 880h6M1059 877v6M1057 875h6M1060 872v6M1056 874h6M1059 871v6M1055 878h6M1058 875v6M1055 887h6M1058 884v6M1056 883h6M1059 880v6M1060 880h6M1063 877v6M1058 882h6M1061 879v6M1057 878h6M1060 875v6M1059 877h6M1062 874v6M1057 873h6M1060 870v6M1058 872h6M1061 869v6M1060 872h6M1063 869v6M1061 886h6M1064 883v6M1058 873h6M1061 870v6M1061 883h6M1064 880v6M1060 874h6M1063 871v6M1064 885h6M1067 882v6M1064 877h6M1067 874v6M1062 886h6M1065 883v6M1063 878h6M1066 875v6M1062 885h6M1065 882v6M1065 874h6M1068 871v6M1063 873h6M1066 870v6M1066 884h6M1069 881v6M1064 885h6M1067 882v6M1067 876h6M1070 873v6M1066 879h6M1069 876v6M1068 877h6M1071 874v6M1064 883h6M1067 880v6M1068 881h6M1071 878v6M1066 886h6M1069 883v6M1070 883h6M1073 880v6M1068 887h6M1071 884v6M1068 879h6M1071 876v6M1069 883h6M1072 880v6M1068 874h6M1071 871v6M1068 878h6M1071 875v6M1069 888h6M1072 885v6M1070 888h6M1073 885v6M1072 881h6M1075 878v6M1073 868h6M1076 865v6M1073 874h6M1076 871v6M1072 885h6M1075 882v6M1073 873h6M1076 870v6M1072 882h6M1075 879v6M1074 880h6M1077 877v6M1073 889h6M1076 886v6M1076 884h6M1079 881v6M1076 892h6M1079 889v6M1074 882h6M1077 879v6M1074 880h6M1077 877v6M1074 879h6M1077 876v6M1078 874h6M1081 871v6M1077 868h6M1080 865v6M1074 879h6M1077 876v6M1076 874h6M1079 871v6M1079 876h6M1082 873v6M1079 874h6M1082 871v6M1076 882h6M1079 879v6M1079 877h6M1082 874v6M1078 880h6M1081 877v6M1079 878h6M1082 875v6M1078 873h6M1081 870v6M1080 870h6M1083 867v6M1081 875h6M1084 872v6M1080 885h6M1083 882v6M1084 882h6M1087 879v6M1080 879h6M1083 876v6M1081 879h6M1084 876v6M1084 868h6M1087 865v6M1083 878h6M1086 875v6M1084 873h6M1087 870v6M1085 875h6M1088 872v6M1086 878h6M1089 875v6M1082 879h6M1085 876v6M1085 871h6M1088 868v6M1084 875h6M1087 872v6M1085 876h6M1088 873v6M1086 872h6M1089 869v6M1084 871h6M1087 868v6M1088 876h6M1091 873v6M1090 864h6M1093 861v6M1086 879h6M1089 876v6M1088 869h6M1091 866v6M1089 882h6M1092 879v6M1092 875h6M1095 872v6M1088 878h6M1091 875v6M1089 870h6M1092 867v6M1091 874h6M1094 871v6M1091 874h6M1094 871v6M1092 874h6M1095 871v6M1091 869h6M1094 866v6M1090 879h6M1093 876v6M1092 879h6M1095 876v6M1094 877h6M1097 874v6M1094 881h6M1097 878v6M1095 878h6M1098 875v6M1094 878h6M1097 875v6M1096 880h6M1099 877v6M1096 866h6M1099 863v6M1097 880h6M1100 877v6M1095 878h6M1098 875v6M1097 876h6M1100 873v6M1094 886h6M1097 883v6M1094 880h6M1097 877v6M1100 875h6M1103 872v6M1100 876h6M1103 873v6M1097 868h6M1100 865v6M1098 876h6M1101 873v6M1097 873h6M1100 870v6M1099 872h6M1102 869v6M1102 874h6M1105 871v6M1098 874h6M1101 871v6M1098 866h6M1101 863v6M1100 876h6M1103 873v6M1103 861h6M1106 858v6M1100 859h6M1103 856v6M1101 871h6M1104 868v6M1102 864h6M1105 861v6M1101 868h6M1104 865v6M1106 834h6M1109 831v6M1103 839h6M1106 836v6M1106 844h6M1109 841v6M1103 845h6M1106 842v6M1103 847h6M1106 844v6M1107 848h6M1110 845v6M1105 843h6M1108 840v6M1106 845h6M1109 842v6M1104 850h6M1107 847v6M1105 836h6M1108 833v6M1109 866h6M1112 863v6M1108 863h6M1111 860v6M1108 862h6M1111 859v6M1106 862h6M1109 859v6M1110 861h6M1113 858v6M1112 878h6M1115 875v6M1108 876h6M1111 873v6M1111 882h6M1114 879v6M1109 866h6M1112 863v6M1111 872h6M1114 869v6M1114 880h6M1117 877v6M1114 876h6M1117 873v6M1113 873h6M1116 870v6M1112 877h6M1115 874v6M1111 867h6M1114 864v6M1116 878h6M1119 875v6M1116 877h6M1119 874v6M1112 882h6M1115 879v6M1113 876h6M1116 873v6M1114 881h6M1117 878v6M1117 879h6M1120 876v6M1117 878h6M1120 875v6M1115 886h6M1118 883v6M1114 879h6M1117 876v6M1114 874h6M1117 871v6M1120 870h6M1123 867v6M1116 880h6M1119 877v6M1117 873h6M1120 870v6M1116 875h6M1119 872v6M1116 876h6M1119 873v6M1119 878h6M1122 875v6M1121 874h6M1124 871v6M1120 876h6M1123 873v6M1119 873h6M1122 870v6M1118 884h6M1121 881v6M1122 885h6M1125 882v6M1123 878h6M1126 875v6M1122 879h6M1125 876v6M1121 880h6M1124 877v6M1120 880h6M1123 877v6M1126 881h6M1129 878v6M1122 876h6M1125 873v6M1126 881h6M1129 878v6M1126 881h6M1129 878v6M1123 879h6M1126 876v6M1126 875h6M1129 872v6M1125 879h6M1128 876v6M1125 876h6M1128 873v6M1125 871h6M1128 868v6M1124 889h6M1127 886v6M1129 878h6M1132 875v6M1130 879h6M1133 876v6M1126 885h6M1129 882v6M1127 879h6M1130 876v6M1126 880h6M1129 877v6M1131 871h6M1134 868v6M1130 880h6M1133 877v6M1132 877h6M1135 874v6M1132 875h6M1135 872v6M1129 877h6M1132 874v6M1134 881h6M1137 878v6M1130 875h6M1133 872v6M1132 873h6M1135 870v6M1130 881h6M1133 878v6M1131 876h6M1134 873v6M1134 867h6M1137 864v6M1135 879h6M1138 876v6M1136 872h6M1139 869v6M1135 871h6M1138 868v6M1135 880h6M1138 877v6M1135 867h6M1138 864v6M1138 864h6M1141 861v6M1136 863h6M1139 860v6M1135 868h6M1138 865v6M1136 876h6M1139 873v6M1136 858h6M1139 855v6M1139 849h6M1142 846v6M1136 840h6M1139 837v6M1136 849h6M1139 846v6M1140 847h6M1143 844v6M1138 820h6M1141 817v6M1140 824h6M1143 821v6M1140 821h6M1143 818v6M1142 830h6M1145 827v6M1141 834h6M1144 831v6M1141 826h6M1144 823v6M1142 834h6M1145 831v6M1140 826h6M1143 823v6M1144 817h6M1147 814v6M1141 818h6M1144 815v6M1146 853h6M1149 850v6M1144 849h6M1147 846v6M1142 843h6M1145 840v6M1142 858h6M1145 855v6M1144 848h6M1147 845v6M1145 862h6M1148 859v6M1148 868h6M1151 865v6M1145 866h6M1148 863v6M1144 857h6M1147 854v6M1147 859h6M1150 856v6M1148 859h6M1151 856v6M1149 861h6M1152 858v6M1148 864h6M1151 861v6M1150 867h6M1153 864v6M1148 860h6M1151 857v6M1148 855h6M1151 852v6M1148 863h6M1151 860v6M1151 851h6M1154 848v6M1151 860h6M1154 857v6M1149 855h6M1152 852v6M1152 833h6M1155 830v6M1153 833h6M1156 830v6M1152 824h6M1155 821v6M1152 833h6M1155 830v6M1153 832h6M1156 829v6M1154 762h6M1157 759v6M1156 775h6M1159 772v6M1157 831h6M1160 828v6M1156 830h6M1159 827v6M1159 827h6M1162 824v6M1158 822h6M1161 819v6M1158 830h6M1161 827v6M1159 824h6M1162 821v6M1160 831h6M1163 828v6M1161 821h6M1164 818v6M1160 813h6M1163 810v6M1162 825h6M1165 822v6M1162 779h6M1165 776v6M1164 788h6M1167 785v6" stroke="#0000ff" stroke-width="2" fill="none" shape-rendering="crispEdges"/><path d="M242 878H246M244 878H248M246 878H250M248 878H252M250 877H254M252 877H256M254 876H258M256 876H260M258 875H262M260 873H264M263 871V870M265 870V868M265 868V866M267 866V863M267 863V858M269 858V852M269 852V840M271 840V827M271 827V783M273 783V739M273 739V628M275 628V518M275 518V538M277 538V559M277 559V658M279 658V756M279 756V793M281 793V830M281 830V841M283 841V852M283 852V856M285 856V861M285 861V864M287 864V866M286 866H290M288 868H292M290 869H294M292 869H296M294 869H298M296 868H300M298 866H302M301 864V862M303 862V860M303 860V857M305 857V854M305 854V850M307 850V845M307 845V837M309 837V829M309 829V813M311 813V797M311 797V760M313 760V723M313 723V621M315 621V519M315 519V346M317 346V172M317 172V200M319 200V229M319 229V394M321 394V560M321 560V648M323 648V737M323 737V770M325 770V803M325 803V817M327 817V831M327 831V838M329 838V846M329 846V850M331 850V855M331 855V858M333 858V860M333 860V862M335 862V864M334 864H338M336 866H340M338 868H342M340 869H344M342 869H346M344 869H348M346 869H350M348 867H352M351 865V862M353 862V860M353 860V854M355 854V848M355 848V828M357 828V807M357 807V754M359 754V700M359 700V707M361 707V714M361 714V753M363 753V792M362 792H366M365 793V743M367 743V693M367 693V557M369 557V421M369 421V448M371 448V475M371 475V599M373 599V723M373 723V770M375 770V816M375 816V830M377 830V844M377 844V850M379 850V856M379 856V858M381 858V861M381 861V862M383 862V864M382 864H386M384 864H388M387 862V859M389 859V856M389 856V848M391 848V839M391 839V808M393 808V777M393 777V692M395 692V607M395 607V624M397 624V640M397 640V716M399 716V791M399 791V818M401 818V844M401 844V852M403 852V860M403 860V864M405 864V867M405 867V868M407 868V870M406 870H410M408 872H412M410 873H414M412 874H416M414 875H418M416 875H420M418 875H422M420 875H424M422 874H426M424 874H428M427 872V870M429 870V869M429 869V865M431 865V861M431 861V853M433 853V845M432 845H436M435 845V850M437 850V855M437 855V854M439 854V852M439 852V842M441 842V833M441 833V828M443 828V823M443 823V814M445 814V804M445 804V750M447 750V696M447 696V554M449 554V412M449 412V439M451 439V466M451 466V594M453 594V722M453 722V770M455 770V818M455 818V832M457 832V847M457 847V853M459 853V859M459 859V862M461 862V865M461 865V867M463 867V869M462 869H466M464 871H468M466 872H470M468 873H472M471 872V870M473 870V868M473 868V860M475 860V852M475 852V854M477 854V855M477 855V862M479 862V869M479 869V872M481 872V874M480 874H484M482 875H486M484 875H488M486 875H490M488 875H492M490 875H494M492 874H496M494 873H498M497 872V870M499 870V869M499 869V868M501 868V866M501 866V863M503 863V860M503 860V854M505 854V849M505 849V836M507 836V823M507 823V780M509 780V736M509 736V626M511 626V516M511 516V518M513 518V521M513 521V571M515 571V621M515 621V664M517 664V707M517 707V756M519 756V806M519 806V824M521 824V843M521 843V850M523 850V856M523 856V858M525 858V861M524 861H528M526 862H530M529 861V858M531 858V854M531 854V845M533 845V836M533 836V802M535 802V769M535 769V678M537 678V586M537 586V604M539 604V622M539 622V703M541 703V784M541 784V813M543 813V842M543 842V850M545 850V859M545 859V862M547 862V866M547 866V868M549 868V870M548 870H552M550 872H554M552 873H556M554 874H558M556 874H560M558 875H562M560 875H564M562 874H566M564 874H568M566 874H570M568 873H572M570 872H574M572 870H576M575 868V866M577 866V864M577 864V861M579 861V858M579 858V852M581 852V845M581 845V830M583 830V814M583 814V762M585 762V711M585 711V581M587 581V451M587 451V474M589 474V497M589 497V610M591 610V722M591 722V759M593 759V796M593 796V788M595 788V780M595 780V728M597 728V677M597 677V688M599 688V700M599 700V748M601 748V795M601 795V804M603 804V813M603 813V786M605 786V759M605 759V680M607 680V601M607 601V618M609 618V634M609 634V708M611 708V782M611 782V810M613 810V837M613 837V845M615 845V853M615 853V856M617 856V858M617 858V856M619 856V855M619 855V844M621 844V834M621 834V804M623 804V774M623 774V780M625 780V785M625 785V811M627 811V837M627 837V844M629 844V850M629 850V840M631 840V830M631 830V797M633 797V764M633 764V772M635 772V779M635 779V810M637 810V841M637 841V852M639 852V863M639 863V866M641 866V870M640 870H644M642 872H646M644 874H648M646 875H650M648 875H652M650 876H654M652 876H656M654 876H658M656 875H660M658 875H662M660 874H664M662 873H666M665 871V870M667 870V868M667 868V865M669 865V862M669 862V854M671 854V846M671 846V819M673 819V792M673 792V718M675 718V645M675 645V658M677 658V672M677 672V736M679 736V800M679 800V822M681 822V843M681 843V848M683 848V853M682 853H686M685 851V842M687 842V834M687 834V800M689 800V766M689 766V672M691 672V579M691 579V598M693 598V616M693 616V700M695 700V783M695 783V812M697 812V842M697 842V850M699 850V859M699 859V862M701 862V866M701 866V868M703 868V870M702 870H706M704 872H708M706 872H710M709 870V866M711 866V862M710 862H714M713 864V868M715 868V871M715 871V872M717 872V874M716 874H720M718 875H722M720 875H724M723 874V872M725 872V870M725 870V864M727 864V857M727 857V842M729 842V828M729 828V830M731 830V833M731 833V846M733 846V859M733 859V864M735 864V869M734 869H738M736 871H740M739 870V868M741 868V865M741 865V854M743 854V844M743 844V820M745 820V795M745 795V800M747 800V804M747 804V826M749 826V849M749 849V858M751 858V867M751 867V870M753 870V872M752 872H756M754 874H758M756 875H760M758 876H762M760 876H764M762 876H766M764 875H768M767 873V871M769 871V869M769 869V864M771 864V860M771 860V844M773 844V828M773 828V784M775 784V740M775 740V748M777 748V757M777 757V796M779 796V835M779 835V848M781 848V862M781 862V866M783 866V870M783 870V872M785 872V873M784 873H788M786 875H790M788 876H792M790 876H794M792 876H796M794 876H798M796 876H800M798 875H802M800 874H804M803 873V872M805 872V870M805 870V868M807 868V865M807 865V859M809 859V853M809 853V834M811 834V815M811 815V776M813 776V736M813 736V742M815 742V747M815 747V780M817 780V813M817 813V820M819 820V827M819 827V810M821 810V794M821 794V800M823 800V806M823 806V826M825 826V845M825 845V852M827 852V860M826 860H830M829 860V852M831 852V845M831 845V826M833 826V806M833 806V809M835 809V812M835 812V828M837 828V844M836 844H840M839 846V833M841 833V820M841 820V822M843 822V825M843 825V835M845 835V845M845 845V839M847 839V833M847 833V808M849 808V783M849 783V789M851 789V795M851 795V820M853 820V844M853 844V854M855 854V864M855 864V867M857 867V870M856 870H860M858 872H862M861 871V870M863 870V868M863 868V862M865 862V855M865 855V840M867 840V824M867 824V827M869 827V830M869 830V844M871 844V859M871 859V864M873 864V870M873 870V872M875 872V874M874 874H878M876 875H880M878 876H882M880 876H884M882 875H886M884 874H888M887 872V870M889 870V867M889 867V858M891 858V848M891 848V823M893 823V798M892 798H896M895 798V809M897 809V820M897 820V829M899 829V838M899 838V850M901 850V861M901 861V866M903 866V870M902 870H906M904 872H908M906 873H910M909 871V868M911 868V866M911 866V856M913 856V846M913 846V819M915 819V792M915 792V797M917 797V802M917 802V826M919 826V850M919 850V858M921 858V866M921 866V868M923 868V870M922 870H926M924 871H928M927 870V867M929 867V864M929 864V856M931 856V847M931 847V828M933 828V810M933 810V812M935 812V815M935 815V831M937 831V847M937 847V852M939 852V858M939 858V856M941 856V853M941 853V840M943 840V826M943 826V796M945 796V766M945 766V771M947 771V776M947 776V802M949 802V828M949 828V836M951 836V844M951 844V833M953 833V822M953 822V783M955 783V744M955 744V753M957 753V762M957 762V798M959 798V835M959 835V848M961 848V861M961 861V865M963 865V869M963 869V871M965 871V873M964 873H968M966 874H970M968 875H972M970 876H974M972 876H976M974 876H978M976 876H980M979 874V872M981 872V871M981 871V866M983 866V862M983 862V852M985 852V842M985 842V844M987 844V845M987 845V854M989 854V863M989 863V866M991 866V870M990 870H994M992 872H996M995 870V868M997 868V865M997 865V858M999 858V850M999 850V835M1001 835V820M1001 820V822M1003 822V823M1003 823V834M1005 834V846M1005 846V848M1007 848V850M1007 850V838M1009 838V825M1009 825V791M1011 791V757M1011 757V764M1013 764V770M1013 770V802M1015 802V833M1015 833V845M1017 845V857M1017 857V860M1019 860V862M1019 862V860M1021 860V858M1021 858V848M1023 848V838M1023 838V818M1025 818V797M1025 797V800M1027 800V804M1027 804V824M1029 824V843M1029 843V851M1031 851V859M1031 859V860M1033 860V862M1033 862V864M1035 864V866M1035 866V869M1037 869V872M1037 872V874M1039 874V875M1038 875H1042M1040 876H1044M1042 877H1046M1044 878H1048M1046 878H1050M1048 879H1052M1050 879H1054M1052 879H1056M1054 879H1058M1056 879H1060M1058 879H1062M1060 879H1064M1062 879H1066M1064 879H1068M1066 879H1070M1068 879H1072M1070 879H1074M1072 879H1076M1074 879H1078M1076 879H1080M1078 879H1082M1080 879H1084M1082 878H1086M1084 877H1088M1087 875V874M1089 874V872M1088 872H1092M1091 872V874M1093 874V875M1092 875H1096M1094 877H1098M1096 877H1100M1098 877H1102M1101 876V874M1103 874V872M1103 872V867M1105 867V862M1105 862V851M1107 851V840M1107 840V842M1109 842V844M1109 844V854M1111 854V864M1111 864V868M1113 868V873M1113 873V874M1115 874V876M1114 876H1118M1116 877H1120M1118 878H1122M1120 878H1124M1122 878H1126M1124 878H1128M1126 878H1130M1128 877H1132M1130 877H1134M1132 876H1136M1134 874H1138M1137 872V868M1139 868V865M1139 865V857M1141 857V849M1141 849V836M1143 836V823M1143 823V824M1145 824V826M1145 826V838M1147 838V849M1147 849V855M1149 855V861M1148 861H1152M1151 863V860M1153 860V857M1153 857V844M1155 844V830M1155 830V797M1157 797V764M1157 764V768M1159 768V773M1159 773V799M1161 799V825M1160 825H1164M1163 825V802M1165 802V778M1165 778V784M1167 784V791" stroke="#000" stroke-width="2" fill="none" stroke-linecap="square" shape-rendering="crispEdges"/><path d="M243 1067V1074M245 1068V1073M247 1068V1073M249 1068V1075M251 1067V1072M253 1067V1074M255 1066V1076M257 1071V1076M259 1073V1075M261 1070V1076M263 1065V1078M265 1065V1080M267 1070V1075M269 1070V1077M271 1072V1079M273 1076V1079M275 1065V1076M277 1076V1079M279 1075V1082M281 1075V1080M283 1072V1080M285 1073V1075M287 1073V1076M289 1072V1089M291 1055V1089M293 1055V1076M295 1070V1077M297 1068V1078M299 1068V1078M301 1071V1078M303 1056V1077M305 1056V1076M307 1068V1076M309 1069V1076M311 1070V1075M313 1071V1075M315 1066V1076M317 1069V1078M319 1069V1075M321 1074V1078M323 1063V1077M325 1063V1077M327 1070V1078M329 1070V1078M331 1070V1078M333 1070V1074M335 1071V1077M337 1055V1075M339 1055V1077M341 1070V1077M343 1065V1077M345 1065V1081M347 1068V1081M349 1072V1078M351 1072V1076M353 1068V1074M355 1064V1074M357 1065V1073M359 1065V1073M361 1053V1074M363 1053V1067M365 1061V1072M367 1068V1072M369 1067V1072M371 1062V1072M373 1065V1070M375 1064V1069M377 1064V1073M379 1068V1072M381 1063V1072M383 1063V1072M385 1066V1070M387 1068V1071M389 1063V1069M391 1062V1069M393 1060V1068M395 1063V1073M397 1066V1072M399 1066V1072M401 1066V1073M403 1067V1071M405 1067V1071M407 1068V1071M409 1067V1072M411 1064V1071M413 1062V1071M415 1063V1071M417 1062V1068M419 1063V1069M421 1063V1071M423 1063V1071M425 1063V1069M427 1062V1078M429 1064V1078M431 1064V1070M433 1063V1068M435 1063V1071M437 1063V1069M439 1067V1086M441 1065V1086M443 1067V1075M445 1066V1075M447 1066V1069M449 1066V1069M451 1066V1074M453 1071V1074M455 1068V1075M457 1068V1077M459 1069V1077M461 1055V1072M463 1055V1076M465 1066V1073M467 1070V1076M469 1069V1076M471 1067V1083M473 1066V1083M475 1066V1070M477 1062V1070M479 1069V1072M481 1068V1072M483 1068V1075M485 1070V1092M487 1072V1092M489 1067V1072M491 1066V1075M493 1066V1074M495 1069V1078M497 1066V1076M499 1069V1076M501 1070V1077M503 1068V1073M505 1069V1076M507 1071V1078M509 1067V1078M511 1074V1076M513 1074V1076M515 1074V1077M517 1073V1077M519 1068V1075M521 1069V1077M523 1075V1080M525 1070V1080M527 1067V1077M529 1070V1078M531 1071V1073M533 1068V1073M535 1069V1075M537 1073V1075M539 1066V1079M541 1066V1077M543 1071V1077M545 1071V1076M547 1063V1074M549 1063V1074M551 1068V1075M553 1069V1082M555 1072V1076M557 1070V1076M559 1070V1075M561 1070V1075M563 1070V1074M565 1066V1093M567 1071V1093M569 1058V1073M571 1058V1074M573 1067V1072M575 1072V1077M577 1067V1073M579 1067V1072M581 1063V1072M583 1062V1072M585 1064V1073M587 1069V1074M589 1063V1071M591 1063V1069M593 1068V1071M595 1067V1077M597 1069V1077M599 1053V1072M601 1053V1070M603 1070V1074M605 1070V1078M607 1070V1078M609 1069V1071M611 1066V1079M613 1064V1077M615 1073V1077M617 1068V1081M619 1068V1075M621 1069V1076M623 1067V1076M625 1065V1070M627 1067V1079M629 1070V1075M631 1068V1075M633 1068V1071M635 1069V1071M637 1068V1073M639 1069V1073M641 1067V1073M643 1069V1074M645 1068V1073M647 1064V1072M649 1064V1076M651 1069V1076M653 1068V1074M655 1067V1074M657 1067V1073M659 1069V1073M661 1063V1071M663 1063V1072M665 1065V1072M667 1052V1069M669 1052V1068M671 1062V1069M673 1062V1070M675 1065V1073M677 1062V1069M679 1060V1069M681 1066V1073M683 1066V1072M685 1066V1072M687 1065V1073M689 1063V1073M691 1065V1069M693 1060V1067M695 1063V1072M697 1064V1072M699 1065V1071M701 1065V1069M703 1064V1071M705 1064V1071M707 1066V1069M709 1063V1067M711 1062V1066M713 1062V1067M715 1064V1067M717 1063V1069M719 1057V1069M721 1059V1069M723 1061V1069M725 1064V1068M727 1063V1072M729 1063V1072M731 1061V1065M733 1064V1069M735 1062V1068M737 1067V1069M739 1065V1071M741 1064V1071M743 1068V1071M745 1066V1078M747 1063V1078M749 1063V1067M751 1064V1068M753 1059V1071M755 1064V1070M757 1066V1074M759 1066V1074M761 1065V1069M763 1066V1071M765 1062V1069M767 1062V1083M769 1065V1083M771 1064V1065M773 1064V1069M775 1066V1069M777 1066V1070M779 1059V1070M781 1062V1070M783 1062V1071M785 1062V1064M787 1064V1069M789 1064V1083M791 1065V1083M793 1065V1069M795 1065V1070M797 1063V1069M799 1063V1086M801 1063V1086M803 1064V1070M805 1063V1070M807 1046V1069M809 1046V1069M811 1065V1070M813 1064V1071M815 1066V1071M817 1063V1071M819 1064V1071M821 1048V1068M823 1048V1072M825 1064V1073M827 1064V1071M829 1067V1070M831 1067V1070M833 1067V1075M835 1067V1075M837 1066V1071M839 1067V1070M841 1068V1076M843 1068V1070M845 1069V1072M847 1069V1074M849 1066V1073M851 1066V1070M853 1066V1072M855 1063V1072M857 1065V1069M859 1062V1069M861 1067V1071M863 1062V1067M865 1065V1068M867 1061V1068M869 1063V1072M871 1063V1070M873 1063V1068M875 1066V1070M877 1066V1070M879 1065V1069M881 1065V1072M883 1069V1070M885 1068V1071M887 1064V1072M889 1068V1073M891 1065V1073M893 1065V1075M895 1068V1074M897 1070V1076M899 1068V1071M901 1069V1075M903 1067V1075M905 1070V1073M907 1071V1078M909 1065V1078M911 1065V1071M913 1068V1073M915 1068V1072M917 1058V1073M919 1058V1073M921 1066V1070M923 1067V1074M925 1066V1074M927 1065V1069M929 1065V1070M931 1067V1074M933 1063V1073M935 1054V1077M937 1054V1073M939 1056V1076M941 1056V1073M943 1065V1071M945 1062V1070M947 1065V1070M949 1065V1073M951 1065V1067M953 1065V1070M955 1064V1069M957 1066V1069M959 1061V1072M961 1065V1072M963 1065V1072M965 1065V1072M967 1065V1067M969 1063V1086M971 1066V1086M973 1062V1071M975 1063V1072M977 1066V1069M979 1049V1073M981 1049V1074M983 1074V1077M985 1067V1077M987 1067V1076M989 1067V1071M991 1069V1073M993 1073V1077M995 1069V1074M997 1066V1073M999 1066V1076M1001 1069V1074M1003 1069V1079M1005 1071V1080M1007 1068V1075M1009 1070V1077M1011 1074V1077M1013 1068V1076M1015 1072V1086M1017 1075V1086M1019 1071V1079M1021 1071V1078M1023 1072V1078M1025 1073V1077M1027 1073V1079M1029 1072V1074M1031 1067V1072M1033 1067V1072M1035 1069V1076M1037 1069V1074M1039 1069V1075M1041 1065V1078M1043 1072V1075M1045 1064V1072M1047 1068V1074M1049 1071V1074M1051 1066V1071M1053 1069V1071M1055 1071V1075M1057 1067V1075M1059 1066V1073M1061 1064V1070M1063 1061V1071M1065 1069V1073M1067 1070V1078M1069 1075V1078M1071 1071V1076M1073 1065V1075M1075 1070V1075M1077 1066V1075M1079 1066V1074M1081 1071V1077M1083 1068V1073M1085 1068V1077M1087 1068V1077M1089 1066V1079M1091 1069V1091M1093 1071V1091M1095 1069V1078M1097 1068V1072M1099 1068V1078M1101 1068V1078M1103 1071V1075M1105 1071V1078M1107 1070V1076M1109 1072V1076M1111 1070V1083M1113 1067V1083M1115 1073V1078M1117 1073V1076M1119 1064V1076M1121 1064V1080M1123 1071V1080M1125 1071V1075M1127 1071V1076M1129 1068V1074M1131 1067V1069M1133 1067V1069M1135 1068V1075M1137 1070V1075M1139 1071V1075M1141 1071V1075M1143 1062V1076M1145 1062V1070M1147 1065V1083M1149 1067V1083M1151 1067V1073M1153 1068V1073M1155 1068V1077M1157 1064V1073M1159 1061V1066M1161 1064V1070M1163 1063V1072M1165 1063V1072M1167 1065V1072" stroke="#000" stroke-width="2" fill="none" stroke-linecap="square" shape-rendering="crispEdges"/><path d="M317 916v18M318 916v18M359 916v18M361 916v18M367 916v18M440 916v18M511 916v18M515 916v18M547 916v18M597 916v18M599 916v18M607 916v18M609 916v18M633 916v18M687 916v18M688 916v18M729 916v18M731 916v18M745 916v18M747 916v18M763 916v18M765 916v18M781 916v18M783 916v18M813 916v18M817 916v18M821 916v18M823 916v18M833 916v18M835 916v18M843 916v18M847 916v18M851 916v18M871 916v18M875 916v18M895 916v18M897 916v18M932 916v18M937 916v18M945 916v18M947 916v18M985 916v18M987 916v18M1001 916v18M1005 916v18M1017 916v18M1018 916v18M1022 916v18M1027 916v18M1069 916v18M1073 916v18M1099 916v18M1103 916v18M1140 916v18M1146 916v18M1157 916v18M1159 916v18M1161 916v18M275 964v18M368 964v18M393 964v18M395 964v18M433 964v18M449 964v18M475 964v18M477 964v18M539 964v18M587 964v18M609 964v18M622 964v18M624 964v18M675 964v18M677 964v18M692 964v18M693 964v18M713 964v18M715 964v18M751 964v18M753 964v18M775 964v18M779 964v18M809 964v18M813 964v18M837 964v18M839 964v18M849 964v18M854 964v18M859 964v18M868 964v18M869 964v18M893 964v18M897 964v18M912 964v18M913 964v18M916 964v18M951 964v18M953 964v18M955 964v18M985 964v18M989 964v18M1011 964v18M1015 964v18M1029 964v18M1033 964v18M1037 964v18M1048 964v18M1049 964v18M1093 964v18M1097 964v18M1101 964v18M1109 964v18M1111 964v18M1139 964v18M1143 964v18M1157 964v18M1163 964v18M1167 964v18" stroke="#ff0000" stroke-width="2" fill="none" shape-rendering="crispEdges"/><path d="M314 160h6M317 157v6" stroke="#0000ff" stroke-width="2" shape-rendering="crispEdges"/><path d="M241 287h21M241 446h11M241 608h21M241 768h11M269 898v-10M513 898v-20M757 898v-10M1001 898v-20M269 1142v-10M513 1142v-20M757 1142v-10M1001 1142v-20" stroke="#000" stroke-width="2.4"/></svg>
<div class="abs" style="left:100px;top:269px;width:131px;text-align:right;font-size:32px;letter-spacing:-0.9px;line-height:34px;color:#111">100.0</div>
<div class="abs" style="left:100px;top:591px;width:131px;text-align:right;font-size:32px;letter-spacing:-0.9px;line-height:34px;color:#111">50.0</div>
<div class="abs" style="left:453px;top:1147px;width:120px;text-align:center;font-size:32px;letter-spacing:-0.8px;line-height:34px;color:#111">50.0</div>
<div class="abs" style="left:940px;top:1147px;width:120px;text-align:center;font-size:32px;letter-spacing:-0.9px;line-height:34px;color:#111">100.0</div>
<div class="abs" style="left:770px;top:1179px;font-family:'Liberation Serif',serif;font-weight:bold;font-size:31.8px;line-height:36px;color:#0000ff">2-Theta [degrees]</div>
<div class="abs" style="left:-44px;top:511px;width:300px;height:34px;transform:rotate(-90deg);transform-origin:150px 17px;font-family:'Liberation Serif',serif;font-weight:bold;font-size:32px;line-height:34px;color:#0000ff;white-space:nowrap;text-align:center">Intensity<sup style="font-size:19px;vertical-align:11px">1/2</sup> [Count<sup style="font-size:19px;vertical-align:11px">1/2</sup>]</div>
<div class="abs" style="left:27px;top:905px;font-size:28px;line-height:34px;color:#ff0000">T-PSZ</div>
<div class="abs" style="left:27px;top:953px;font-size:28px;line-height:34px;color:#ff0000">corundum</div>
<div class="abs pin" style="left:1167px;top:563px;width:681px;height:838px;border-radius:12px 12px 0 0;box-shadow:0 16px 26px rgba(0,0,0,0.8);border:1px solid #a0a0a0"></div>
<div class="abs" style="left:1168px;top:564px;width:679px;height:44px;border-radius:11px 11px 0 0;background:linear-gradient(to bottom,#ececec,#dcdcdc 50%,#d2d2d2);border-bottom:2px solid #7c7c7c"></div>
<div class="abs" style="left:1184px;top:572px;width:28px;height:28px;border-radius:50%;border:2px solid #7a1c1c;background:radial-gradient(circle at 50% 80%,#ffd0d0 0%,#f06060 40%,#b01818 100%)"></div>
<div class="abs" style="left:1226px;top:572px;width:28px;height:28px;border-radius:50%;border:2px solid #9a9a9a;background:radial-gradient(circle at 50% 75%,#ffffff 0%,#e6e6e6 35%,#cacaca 100%)"></div>
<div class="abs" style="left:1268px;top:572px;width:28px;height:28px;border-radius:50%;border:2px solid #2c5a18;background:radial-gradient(circle at 50% 80%,#e0ffb0 0%,#7fd040 40%,#2e7a10 100%)"></div>
<div class="abs" style="left:1179px;top:626px;font-size:26px;letter-spacing:1px;line-height:36px;color:#1a1a1a;white-space:nowrap;-webkit-text-stroke:0.35px #1a1a1a">Intensity scale mode:</div>
<div class="abs" style="left:1179px;top:678px;font-size:26px;letter-spacing:1px;line-height:36px;color:#1a1a1a;white-space:nowrap;-webkit-text-stroke:0.35px #1a1a1a">X&#8211;axis plot mode:</div>
<div class="abs" style="left:1515px;top:623px;width:316px;height:40px;border-radius:8px;border:2px solid #888;box-shadow:0 0 0 3px rgba(120,160,210,0.75);border-color:#5a7eaa;background:linear-gradient(to bottom,#fdfdfd,#f0f0f0 45%,#e2e2e2 55%,#fafafa);overflow:hidden"><div class="abs" style="left:273px;top:0;width:41px;height:36px;background:linear-gradient(to bottom,#9cc0ee,#6a9ee0 45%,#3c86e0 50%,#6cb8f4 80%,#b0e8ff);border-left:1px solid #4a6aa8"></div><svg class="abs" style="left:286px;top:6px" width="16" height="26"><path d="M8 1L14 9H2Z M8 25L14 17H2Z" fill="#000"/></svg><div class="abs" style="left:12px;top:0px;font-size:25px;letter-spacing:1px;line-height:36px;color:#111">sqrt</div></div>
<div class="abs" style="left:1515px;top:677px;width:316px;height:40px;border-radius:8px;border:2px solid #888;background:linear-gradient(to bottom,#fdfdfd,#f0f0f0 45%,#e2e2e2 55%,#fafafa);overflow:hidden"><div class="abs" style="left:273px;top:0;width:41px;height:36px;background:linear-gradient(to bottom,#9cc0ee,#6a9ee0 45%,#3c86e0 50%,#6cb8f4 80%,#b0e8ff);border-left:1px solid #4a6aa8"></div><svg class="abs" style="left:286px;top:6px" width="16" height="26"><path d="M8 1L14 9H2Z M8 25L14 17H2Z" fill="#000"/></svg><div class="abs" style="left:12px;top:0px;font-size:25px;letter-spacing:1px;line-height:36px;color:#111">Default</div></div>
<div class="abs" style="left:1186px;top:740px;width:28px;height:28px;border-radius:4px;border:2px solid #8a8a8a;background:linear-gradient(to bottom,#fafafa,#ececec 50%,#dedede 55%,#ffffff)"></div>
<div class="abs" style="left:1226px;top:736px;font-size:26px;letter-spacing:1px;line-height:36px;color:#1a1a1a;white-space:nowrap;-webkit-text-stroke:0.35px #1a1a1a">Subtract background</div>
<div class="abs" style="left:1516px;top:740px;width:28px;height:28px;border-radius:4px;border:2px solid #8a8a8a;background:linear-gradient(to bottom,#fafafa,#ececec 50%,#dedede 55%,#ffffff)"></div>
<div class="abs" style="left:1556px;top:736px;font-size:26px;letter-spacing:1px;line-height:36px;color:#1a1a1a;white-space:nowrap;-webkit-text-stroke:0.35px #1a1a1a">Calibration Correction</div>
<div class="abs" style="left:1186px;top:794px;width:28px;height:28px;border-radius:4px;border:2px solid #8a8a8a;background:linear-gradient(to bottom,#fafafa,#ececec 50%,#dedede 55%,#ffffff)"></div>
<div class="abs" style="left:1226px;top:790px;font-size:26px;letter-spacing:1px;line-height:36px;color:#1a1a1a;white-space:nowrap;-webkit-text-stroke:0.35px #1a1a1a">Black &amp; White</div>
<div class="abs" style="left:1179px;top:842px;font-size:26px;letter-spacing:1px;line-height:36px;color:#1a1a1a;white-space:nowrap;-webkit-text-stroke:0.35px #1a1a1a">Data marker number:</div>
<div class="abs" style="left:1508px;top:834px;width:330px;height:54px;background:#fff;border:2px solid #c8c8c8;border-top:3px solid #8c8c8c"></div>
<div class="abs" style="left:1517px;top:843px;font-size:25px;letter-spacing:1px;line-height:36px;color:#1a1a1a;white-space:nowrap;-webkit-text-stroke:0.35px #1a1a1a">4</div>
<div class="abs" style="left:1179px;top:896px;font-size:26px;letter-spacing:1px;line-height:36px;color:#1a1a1a;white-space:nowrap;-webkit-text-stroke:0.35px #1a1a1a">Data marker scale factor:</div>
<div class="abs" style="left:1508px;top:888px;width:330px;height:54px;background:#fff;border:2px solid #c8c8c8;border-top:3px solid #8c8c8c"></div>
<div class="abs" style="left:1517px;top:897px;font-size:25px;letter-spacing:1px;line-height:36px;color:#1a1a1a;white-space:nowrap;-webkit-text-stroke:0.35px #1a1a1a">0.5</div>
<div class="abs" style="left:1179px;top:950px;font-size:26px;letter-spacing:1px;line-height:36px;color:#1a1a1a;white-space:nowrap;-webkit-text-stroke:0.35px #1a1a1a">Axes title font:</div>
<div class="abs" style="left:1508px;top:942px;width:330px;height:54px;background:#fff;border:2px solid #c8c8c8;border-top:3px solid #8c8c8c"></div>
<div class="abs" style="left:1517px;top:951px;font-size:25px;letter-spacing:1px;line-height:36px;color:#1a1a1a;white-space:nowrap;-webkit-text-stroke:0.35px #1a1a1a">TimesRoman</div>
<div class="abs" style="left:1179px;top:1004px;font-size:26px;letter-spacing:1px;line-height:36px;color:#1a1a1a;white-space:nowrap;-webkit-text-stroke:0.35px #1a1a1a">X axis title font size:</div>
<div class="abs" style="left:1508px;top:996px;width:330px;height:54px;background:#fff;border:2px solid #c8c8c8;border-top:3px solid #8c8c8c"></div>
<div class="abs" style="left:1517px;top:1005px;font-size:25px;letter-spacing:1px;line-height:36px;color:#1a1a1a;white-space:nowrap;-webkit-text-stroke:0.35px #1a1a1a">16</div>
<div class="abs" style="left:1179px;top:1058px;font-size:26px;letter-spacing:1px;line-height:36px;color:#1a1a1a;white-space:nowrap;-webkit-text-stroke:0.35px #1a1a1a">Y axis title font size:</div>
<div class="abs" style="left:1508px;top:1050px;width:330px;height:54px;background:#fff;border:2px solid #c8c8c8;border-top:3px solid #8c8c8c"></div>
<div class="abs" style="left:1517px;top:1059px;font-size:25px;letter-spacing:1px;line-height:36px;color:#1a1a1a;white-space:nowrap;-webkit-text-stroke:0.35px #1a1a1a">16</div>
<div class="abs" style="left:1179px;top:1112px;font-size:26px;letter-spacing:1px;line-height:36px;color:#1a1a1a;white-space:nowrap;-webkit-text-stroke:0.35px #1a1a1a">Labels font:</div>
<div class="abs" style="left:1508px;top:1104px;width:330px;height:54px;background:#fff;border:2px solid #c8c8c8;border-top:3px solid #8c8c8c"></div>
<div class="abs" style="left:1517px;top:1113px;font-size:25px;letter-spacing:1px;line-height:36px;color:#1a1a1a;white-space:nowrap;-webkit-text-stroke:0.35px #1a1a1a">Helvetica</div>
<div class="abs" style="left:1179px;top:1166px;font-size:26px;letter-spacing:1px;line-height:36px;color:#1a1a1a;white-space:nowrap;-webkit-text-stroke:0.35px #1a1a1a">X axis label font size:</div>
<div class="abs" style="left:1508px;top:1158px;width:330px;height:54px;background:#fff;border:2px solid #c8c8c8;border-top:3px solid #8c8c8c"></div>
<div class="abs" style="left:1517px;top:1167px;font-size:25px;letter-spacing:1px;line-height:36px;color:#1a1a1a;white-space:nowrap;-webkit-text-stroke:0.35px #1a1a1a">16</div>
<div class="abs" style="left:1179px;top:1220px;font-size:26px;letter-spacing:1px;line-height:36px;color:#1a1a1a;white-space:nowrap;-webkit-text-stroke:0.35px #1a1a1a">Y axis label font size:</div>
<div class="abs" style="left:1508px;top:1212px;width:330px;height:54px;background:#fff;border:2px solid #c8c8c8;border-top:3px solid #8c8c8c"></div>
<div class="abs" style="left:1517px;top:1221px;font-size:25px;letter-spacing:1px;line-height:36px;color:#1a1a1a;white-space:nowrap;-webkit-text-stroke:0.35px #1a1a1a">16</div>
<div class="abs" style="left:1179px;top:1274px;font-size:26px;letter-spacing:1px;line-height:36px;color:#1a1a1a;white-space:nowrap;-webkit-text-stroke:0.35px #1a1a1a">Phase label font size:</div>
<div class="abs" style="left:1508px;top:1266px;width:330px;height:54px;background:#fff;border:2px solid #c8c8c8;border-top:3px solid #8c8c8c"></div>
<div class="abs" style="left:1517px;top:1275px;font-size:25px;letter-spacing:1px;line-height:36px;color:#1a1a1a;white-space:nowrap;-webkit-text-stroke:0.35px #1a1a1a">14</div>
<div class="abs" style="left:1438px;top:1336px;width:137px;height:42px;border-radius:21px;border:2px solid #8a8a8a;background:linear-gradient(to bottom,#ffffff,#f2f2f2 45%,#dcdcdc 55%,#f8f8f8);text-align:center;font-size:26px;letter-spacing:1px;line-height:38px;color:#111">Done</div>
<svg class="abs" style="left:1820px;top:1372px" width="26" height="26"><path d="M4 24L24 4M10 24L24 10M16 24L24 16" stroke="#9a9a9a" stroke-width="1.6"/></svg>
<svg class="abs" style="left:0;top:0" width="2054" height="1582"><ellipse cx="1316" cy="645.6" rx="155" ry="34" fill="none" stroke="#f00000" stroke-width="6"/><ellipse cx="1524.7" cy="860.2" rx="38" ry="30.5" fill="none" stroke="#f00000" stroke-width="5.5"/></svg>
<div id="menubar"></div>
<svg class="abs" style="left:38px;top:2px;z-index:51" width="34" height="40"><defs><linearGradient id="ap" x1="0" y1="0" x2="0" y2="1"><stop offset="0" stop-color="#5aa0ff"/><stop offset="1" stop-color="#1a50e0"/></linearGradient></defs><path d="M22 2C22 6 19 9 16 9C16 5 19 2 22 2Z M17 12C20 12 22 10 25 10C28 10 30 12 31 14C27 16 27 22 32 25C30 31 27 37 24 37C21 37 21 35 17 35C13 35 13 37 10 37C6 37 1 28 1 21C1 15 5 11 9 11C12 11 14 12 17 12Z" fill="url(#ap)"/></svg>
<div class="menu" style="left:109px;z-index:51;font-weight:bold">Maud</div>
<div class="menu" style="left:225px;z-index:51;">File</div>
<div class="menu" style="left:309px;z-index:51;">Edit</div>
<div class="menu" style="left:397px;z-index:51;">Plotting</div>
<div class="menu" style="left:540px;z-index:51;">Tools</div>
<svg class="abs" style="left:1600px;top:0;z-index:51" width="454" height="42"><path d="M41 15L34 22L41 29M59 15L66 22L59 29" stroke="#1a1a1a" stroke-width="3.2" fill="none"/><path d="M43 22h14" stroke="#b0b0b0" stroke-width="3" stroke-dasharray="3 2"/><path d="M93 7h34v28h-5v-5h-24v5h-5z" fill="#fff" stroke="#222" stroke-width="2.2" stroke-linejoin="round"/><rect x="96.5" y="10" width="27" height="16" rx="1" fill="#333"/><path d="M150 13Q170 0 190 13L170 35Z" fill="none" stroke="#222" stroke-width="2.2" stroke-linejoin="round"/><path d="M225 14L236 27L230 33V8L236 14L225 27" fill="none" stroke="#999" stroke-width="2.2"/><rect x="270" y="10" width="38" height="23" rx="3" fill="#fff" stroke="#a8a8a8" stroke-width="2.4"/><path d="M309 17h3v9h-3z" fill="#bbb"/><path d="M277 22h9" stroke="#111" stroke-width="4"/><path d="M285 16h6v12h-6z" fill="#111"/><path d="M291 18.5h7M291 25.5h7" stroke="#111" stroke-width="2.4"/><path d="M418 16h5l9-7v27l-9-7h-5z" fill="#1a1a1a"/></svg>
<div class="menu" style="left:1923px;top:5px;z-index:51;font-size:26px;letter-spacing:-0.5px;color:#333">(99%)</div></body></html>
